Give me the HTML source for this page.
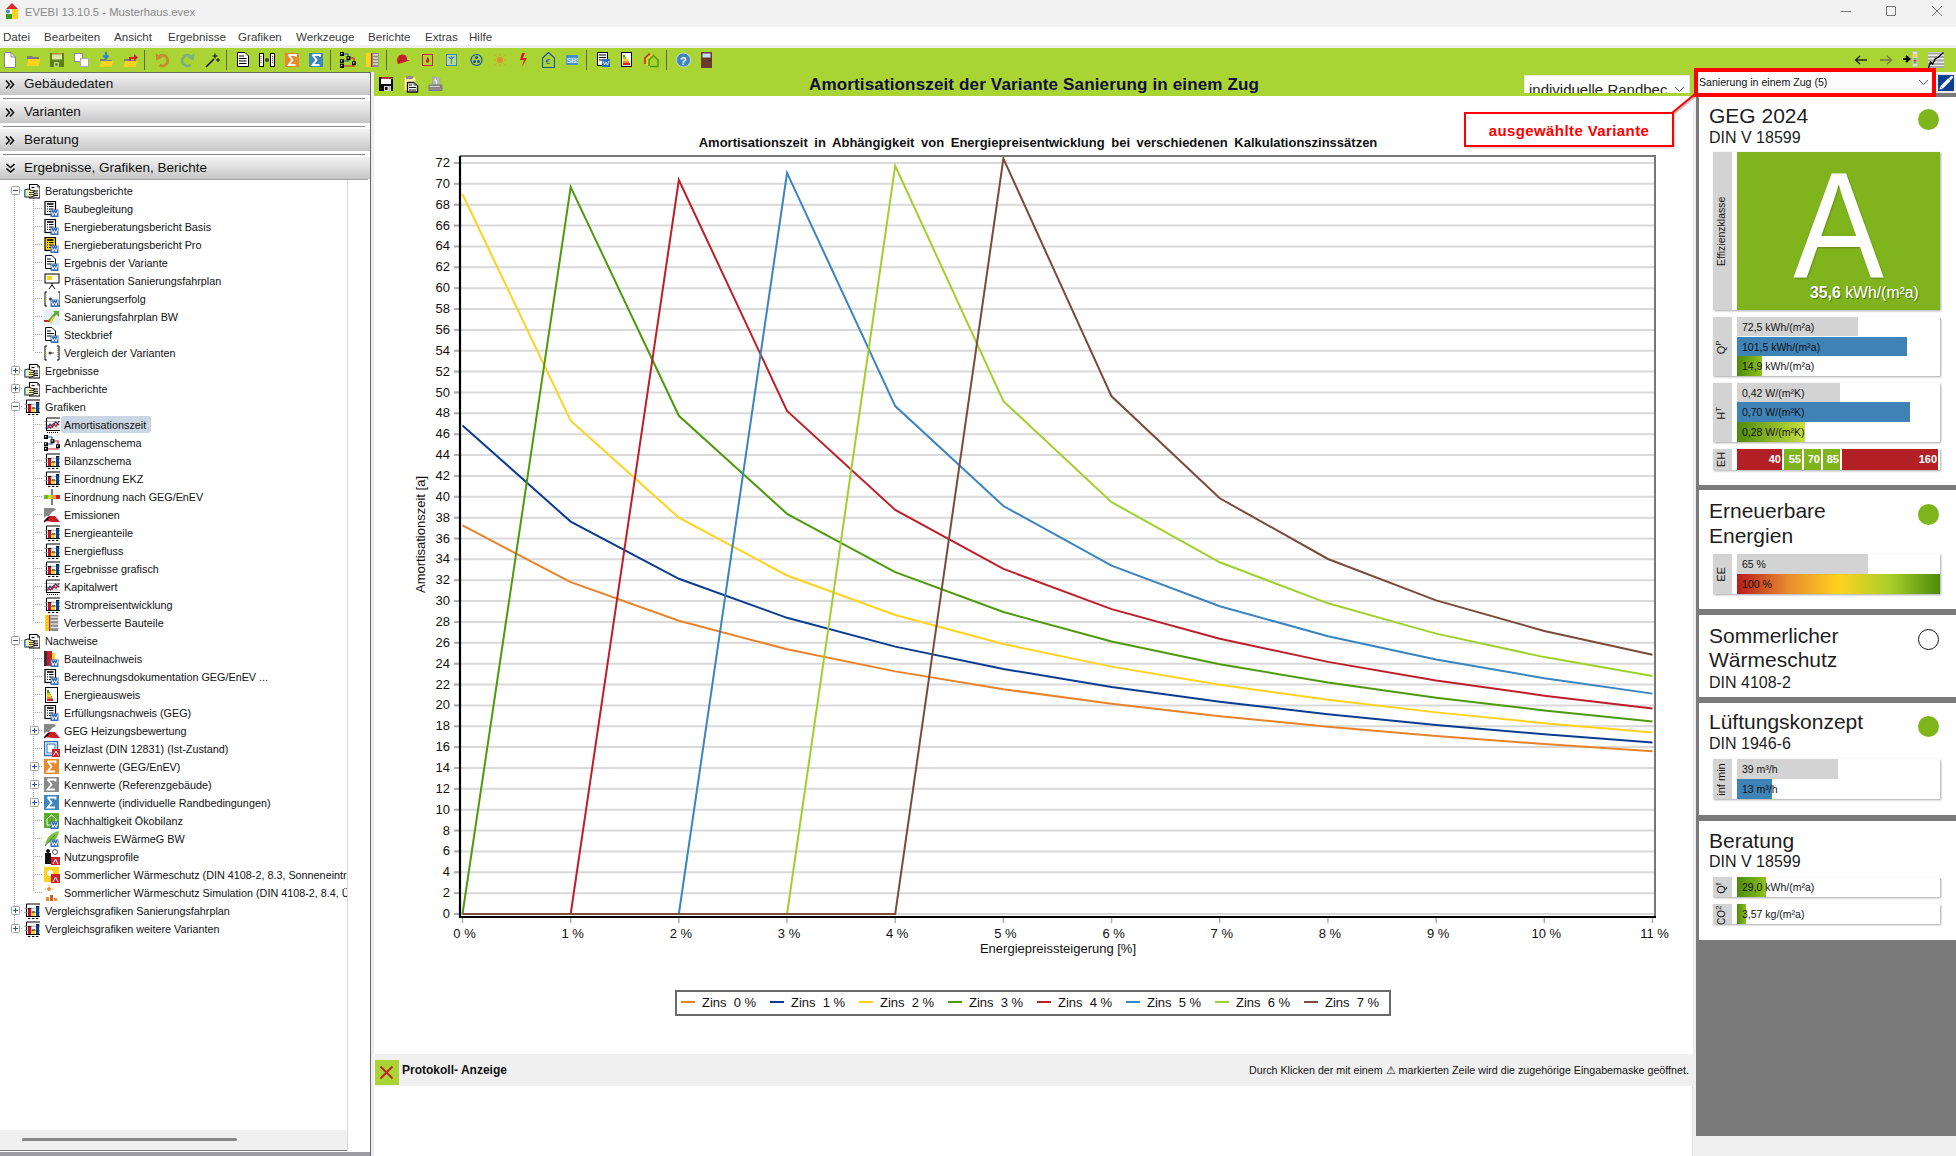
<!DOCTYPE html><html><head><meta charset="utf-8"><style>
*{margin:0;padding:0;box-sizing:border-box}
html,body{width:1956px;height:1156px;overflow:hidden;background:#fff;font-family:"Liberation Sans",sans-serif}
.a{position:absolute}
.t{position:absolute;white-space:pre;line-height:1}
</style></head><body>

<div class="a" style="left:0;top:0;width:1956px;height:27px;background:#F2F2F2"></div>
<svg class="a" style="left:5px;top:3px" width="14" height="17" viewBox="0 0 14 17">
<polygon points="7,0 13,6 1,6" fill="#D32F2F"/><rect x="1" y="6" width="7" height="5" fill="#fff"/>
<circle cx="3" cy="8.5" r="2" fill="#3C8AD0"/><rect x="1" y="11" width="6" height="5" fill="#3E9A1E"/><rect x="7" y="6" width="6" height="10" fill="#FFD21E"/></svg>
<div class="t" style="left:25px;top:7px;font-size:11.3px;color:#888">EVEBI 13.10.5 - Musterhaus.evex</div>
<div class="a" style="left:1841px;top:11px;width:10px;height:1px;background:#777"></div>
<div class="a" style="left:1886px;top:6px;width:10px;height:10px;border:1px solid #777;border-radius:1px"></div>
<svg class="a" style="left:1931px;top:5px" width="12" height="12" viewBox="0 0 12 12"><path d="M1,1 L11,11 M11,1 L1,11" stroke="#777" stroke-width="1"/></svg>
<div class="a" style="left:0;top:27px;width:1956px;height:19px;background:#fff"></div>
<div class="a" style="left:0;top:45px;width:1956px;height:3px;background:#F0F0F0"></div>
<div class="t" style="left:3px;top:31px;font-size:11.6px;color:#3a3a3a">Datei</div>
<div class="t" style="left:44px;top:31px;font-size:11.6px;color:#3a3a3a">Bearbeiten</div>
<div class="t" style="left:114px;top:31px;font-size:11.6px;color:#3a3a3a">Ansicht</div>
<div class="t" style="left:168px;top:31px;font-size:11.6px;color:#3a3a3a">Ergebnisse</div>
<div class="t" style="left:238px;top:31px;font-size:11.6px;color:#3a3a3a">Grafiken</div>
<div class="t" style="left:296px;top:31px;font-size:11.6px;color:#3a3a3a">Werkzeuge</div>
<div class="t" style="left:368px;top:31px;font-size:11.6px;color:#3a3a3a">Berichte</div>
<div class="t" style="left:425px;top:31px;font-size:11.6px;color:#3a3a3a">Extras</div>
<div class="t" style="left:469px;top:31px;font-size:11.6px;color:#3a3a3a">Hilfe</div>
<div class="a" style="left:0;top:48px;width:1956px;height:24px;background:#AAD334"></div>
<div class="a" style="left:374px;top:72px;width:1322px;height:24px;background:#AAD334"></div>
<svg class="a" style="left:3px;top:52px" width="14" height="16" viewBox="0 0 14 16"><path d="M1.5,0.5 H8 L12.5,5 V15.5 H1.5 Z" fill="#fff" stroke="#888"/><path d="M8,0.5 V5 H12.5" fill="none" stroke="#888"/></svg>
<svg class="a" style="left:26px;top:52px" width="15" height="16" viewBox="0 0 15 16"><path d="M1,4 H6 L7,5 H13 V7 H1 Z" fill="#7d7d7d"/><path d="M0.5,14 L2.5,7 H14.5 L12.5,14 Z" fill="#FFD21E"/></svg>
<svg class="a" style="left:50px;top:52px" width="14" height="16" viewBox="0 0 14 16"><rect x="0" y="1" width="14" height="14" fill="#5E7F1D"/><rect x="2" y="1" width="10" height="1.5" fill="#D98A3A"/><rect x="2" y="2.5" width="10" height="5" fill="#D7E9A0"/><rect x="4" y="10" width="5" height="5" fill="#B9D07A"/><rect x="5.5" y="11.5" width="2" height="2" fill="#4A6A14"/></svg>
<svg class="a" style="left:74px;top:52px" width="15" height="16" viewBox="0 0 15 16"><rect x="0.5" y="1.5" width="8" height="8" fill="#fff" stroke="#8a8a8a"/><rect x="6.5" y="6.5" width="8" height="8" fill="#fff" stroke="#aaa"/></svg>
<svg class="a" style="left:99px;top:52px" width="15" height="16" viewBox="0 0 15 16"><path d="M1,7 H6 L7,8 H13 V9 H1 Z" fill="#7d7d7d"/><path d="M0.5,15 L2.5,9 H14.5 L12.5,15 Z" fill="#FFD21E"/><path d="M7,0 V5 M4.5,3.5 L7,6.5 L9.5,3.5" stroke="#2E86D0" stroke-width="2" fill="none"/></svg>
<svg class="a" style="left:123px;top:52px" width="16" height="16" viewBox="0 0 16 16"><path d="M1,7 H6 L7,8 H13 V9 H1 Z" fill="#7d7d7d"/><path d="M0.5,15 L2.5,9 H14.5 L12.5,15 Z" fill="#FFD21E"/><path d="M6,9 V5 H11 V2 L15,5.5 L11,9 V7 H8 V9 Z" fill="#D0202A"/></svg>
<div class="a" style="left:144px;top:50px;width:1px;height:20px;background:#5a6a30"></div>
<svg class="a" style="left:155px;top:52px" width="15" height="16" viewBox="0 0 15 16"><path d="M4,4.5 A5.3,5.3 0 1 1 4.5,13" fill="none" stroke="#C68A30" stroke-width="2.8"/><path d="M0.5,1.5 L1.5,8.5 L7.5,5.5 Z" fill="#C68A30"/></svg>
<svg class="a" style="left:180px;top:52px" width="15" height="16" viewBox="0 0 15 16"><path d="M11,4.5 A5.3,5.3 0 1 0 10.5,13" fill="none" stroke="#7DB07E" stroke-width="2.8"/><path d="M14.5,1.5 L13.5,8.5 L7.5,5.5 Z" fill="#7DB07E"/></svg>
<svg class="a" style="left:205px;top:52px" width="15" height="16" viewBox="0 0 15 16"><path d="M1,15 L9,7" stroke="#111" stroke-width="1.6"/><path d="M10,1.5 V6.5 M7.5,4 H12.5" stroke="#111" stroke-width="1.1"/><path d="M13,6 V10 M11,8 H15" stroke="#111" stroke-width="1"/></svg>
<div class="a" style="left:226px;top:50px;width:1px;height:20px;background:#5a6a30"></div>
<svg class="a" style="left:237px;top:52px" width="12" height="16" viewBox="0 0 12 16"><path d="M0.5,0.5 H8 L11.5,4 V14.5 H0.5 Z" fill="#fff" stroke="#000" stroke-width="1"/><path d="M2,4 H7 M2,6.5 H9.5 M2,9 H9.5 M2,11.5 H9.5" stroke="#000" stroke-width="1"/></svg>
<svg class="a" style="left:259px;top:52px" width="17" height="16" viewBox="0 0 17 16"><rect x="0.5" y="1.5" width="4" height="13" fill="#fff" stroke="#000"/><rect x="11.5" y="1.5" width="4" height="13" fill="#fff" stroke="#000"/><circle cx="8" cy="8" r="2" fill="#444"/><path d="M2,4 V12 M13.5,4 V12" stroke="#C0202A" stroke-dasharray="1,1"/></svg>
<svg class="a" style="left:285px;top:52px" width="14" height="16" viewBox="0 0 14 16"><rect x="0" y="1" width="14" height="14" fill="#E8892E"/><path d="M3.5,3 H11 V5 M10.5,13 H3.5 L7.5,8 L3.5,3" fill="none" stroke="#fff" stroke-width="1.8"/></svg>
<svg class="a" style="left:309px;top:52px" width="14" height="16" viewBox="0 0 14 16"><rect x="0" y="1" width="14" height="14" fill="#3E86BF"/><path d="M3.5,3 H11 V5 M10.5,13 H3.5 L7.5,8 L3.5,3" fill="none" stroke="#fff" stroke-width="1.8"/></svg>
<div class="a" style="left:330px;top:50px;width:1px;height:20px;background:#5a6a30"></div>
<svg class="a" style="left:340px;top:52px" width="16" height="16" viewBox="0 0 16 16"><path d="M4,2 H8 V4.5 M4,9 H8 V8" fill="none" stroke="#1b4fae" stroke-width="1.2"/><path d="M10.5,6 H14 V9.5 M4,14 H14 V13.5" fill="none" stroke="#D0202A" stroke-width="1.2"/><rect x="0" y="0" width="4" height="4" fill="#000"/><rect x="1" y="1" width="1.3" height="1.3" fill="#fff"/><rect x="6.5" y="4.2" width="4" height="4" fill="#000"/><rect x="7.5" y="5.2" width="1.3" height="1.3" fill="#fff"/><rect x="0" y="7.3" width="4" height="4" fill="#000"/><rect x="1" y="8.3" width="1.3" height="1.3" fill="#fff"/><rect x="0" y="12" width="4" height="4" fill="#000"/><rect x="1" y="13" width="1.3" height="1.3" fill="#fff"/><rect x="12" y="9.3" width="4" height="4" fill="#000"/><rect x="13" y="10.3" width="1.3" height="1.3" fill="#fff"/></svg>
<svg class="a" style="left:366px;top:52px" width="13" height="16" viewBox="0 0 13 16"><rect x="0" y="1" width="5" height="14" fill="#FFD21E"/><rect x="5" y="1" width="1.5" height="14" fill="#C0202A"/><rect x="6.5" y="1" width="6" height="14" fill="#888"/><path d="M7,3 H12 M7,6 H12 M7,9 H12 M7,12 H12" stroke="#ddd" stroke-width="1.3"/></svg>
<div class="a" style="left:386px;top:50px;width:1px;height:20px;background:#5a6a30"></div>
<svg class="a" style="left:396px;top:52px" width="15" height="16" viewBox="0 0 15 16"><path d="M1,9 C1,3 6,1.5 9,3 C11,4 11,6 11,8 L14,8 L9,10 L2,12 Z" fill="#C62028"/></svg>
<svg class="a" style="left:422px;top:52px" width="12" height="16" viewBox="0 0 12 16"><rect x="0.5" y="2.5" width="10" height="11" fill="none" stroke="#C62028"/><path d="M5.5,5 C7,7 8,8 7,10 C6,11 4,11 4,9 C4,8 5,7 5.5,5 Z" fill="#C62028"/></svg>
<svg class="a" style="left:446px;top:52px" width="12" height="16" viewBox="0 0 12 16"><rect x="0.5" y="2.5" width="10" height="11" fill="#C8E0F0" fill-opacity="0.5" stroke="#3E86BF"/><path d="M5.5,4 V12 M5.5,7 L8.5,4.5 M5.5,7 L2.5,5" stroke="#3E86BF" stroke-width="1.2"/></svg>
<svg class="a" style="left:470px;top:52px" width="13" height="16" viewBox="0 0 13 16"><circle cx="6.5" cy="8" r="5.5" fill="none" stroke="#1b4fae" stroke-width="1.2"/><circle cx="6.5" cy="5.5" r="1.5" fill="#1b4fae"/><circle cx="4.5" cy="9.5" r="1.5" fill="#1b4fae"/><circle cx="8.5" cy="9.5" r="1.5" fill="#1b4fae"/></svg>
<svg class="a" style="left:494px;top:52px" width="13" height="16" viewBox="0 0 13 16"><circle cx="6" cy="8" r="3" fill="#E8892E"/><path d="M6,1.5 V3.5 M6,12.5 V14.5 M-0.5,8 H1.5 M10.5,8 H12.5 M1.5,3.5 L2.8,4.8 M9.2,11.2 L10.5,12.5 M10.5,3.5 L9.2,4.8 M2.8,11.2 L1.5,12.5" stroke="#E8892E" stroke-width="1"/></svg>
<svg class="a" style="left:519px;top:52px" width="9" height="16" viewBox="0 0 9 16"><path d="M3,1 L1,8 H5 L3,15 L8,6 H4 L6,1 Z" fill="#D0202A"/></svg>
<svg class="a" style="left:542px;top:52px" width="13" height="16" viewBox="0 0 13 16"><path d="M0.5,15.5 V6 L6.5,0.5 L12.5,6 V15.5 Z" fill="none" stroke="#1b4fae" stroke-width="1.2"/><text x="3.5" y="12" font-size="8" fill="#1b4fae" font-family="Liberation Sans">€</text></svg>
<svg class="a" style="left:566px;top:52px" width="12" height="16" viewBox="0 0 12 16"><rect x="0" y="3" width="12" height="10" fill="#4A8FC8"/><text x="0.5" y="11" font-size="7.5" font-weight="bold" fill="#d8ecfa" font-family="Liberation Sans" letter-spacing="-0.6">SBS</text></svg>
<div class="a" style="left:586px;top:50px;width:1px;height:20px;background:#5a6a30"></div>
<svg class="a" style="left:597px;top:52px" width="14" height="16" viewBox="0 0 14 16"><rect x="0.5" y="0.5" width="10" height="13" fill="#fff" stroke="#000"/><path d="M2,3 H9 M2,5.5 H9 M2,8 H7" stroke="#000"/><rect x="5" y="7" width="8" height="8" fill="#2F6DB5"/><path d="M6,9 L7.5,13 L9,10 L10.5,13 L12,9" stroke="#fff" stroke-width="0.8" fill="none"/></svg>
<svg class="a" style="left:621px;top:52px" width="11" height="16" viewBox="0 0 11 16"><rect x="0.5" y="0.5" width="10" height="14" fill="#fff" stroke="#000"/><rect x="2" y="3" width="2" height="2" fill="#4F9A0C"/><rect x="2" y="5" width="3.5" height="2" fill="#9FD12C"/><rect x="2" y="7" width="5" height="2" fill="#FFD21E"/><rect x="2" y="9" width="6" height="2" fill="#E8892E"/><rect x="2" y="11" width="7" height="2" fill="#D0202A"/></svg>
<svg class="a" style="left:644px;top:52px" width="16" height="16" viewBox="0 0 16 16"><path d="M1,12 V6 L5,2 L7,4" fill="none" stroke="#C62028" stroke-width="1.5"/><path d="M3,13 V7 L7,3 L9,5" fill="none" stroke="#FFD21E" stroke-width="1.5"/><path d="M6,14.5 H14 V8 L9.5,3.5 L5,8 V14" fill="none" stroke="#4F9A0C" stroke-width="1.5"/></svg>
<div class="a" style="left:666px;top:50px;width:1px;height:20px;background:#5a6a30"></div>
<svg class="a" style="left:676px;top:52px" width="15" height="16" viewBox="0 0 15 16"><circle cx="7.5" cy="8" r="7" fill="#3E86BF" stroke="#dde" stroke-width="0.8"/><text x="4" y="12.5" font-size="11" font-weight="bold" fill="#fff" font-family="Liberation Sans">?</text></svg>
<svg class="a" style="left:701px;top:52px" width="11" height="16" viewBox="0 0 11 16"><rect x="0" y="0" width="11" height="16" fill="#6B3B2A"/><rect x="1.5" y="1.5" width="8" height="4" fill="#BFE0F0"/><rect x="7.5" y="8" width="2" height="1" fill="#222"/></svg>
<svg class="a" style="left:1854px;top:54px" width="14" height="12" viewBox="0 0 14 12"><path d="M13,6 H2 M6,2 L1.5,6 L6,10" fill="none" stroke="#222" stroke-width="1.3"/></svg>
<svg class="a" style="left:1879px;top:54px" width="14" height="12" viewBox="0 0 14 12"><path d="M1,6 H12 M8,2 L12.5,6 L8,10" fill="none" stroke="#6a7a40" stroke-width="1.3"/></svg>
<svg class="a" style="left:1903px;top:51px" width="16" height="16" viewBox="0 0 16 16"><path d="M0,8 H5 M3,5 L6.5,8 L3,11" fill="none" stroke="#000" stroke-width="2"/><rect x="9.5" y="0.5" width="5" height="15" fill="#ddd" stroke="#bbb" stroke-width="0.5"/><rect x="10.5" y="3" width="3" height="3" fill="#FFD21E"/><rect x="10.5" y="7" width="3" height="1.5" fill="#6a3"/><rect x="10.5" y="9" width="3" height="1.5" fill="#c22"/><rect x="10.5" y="11" width="3" height="1.5" fill="#6a3"/></svg>
<svg class="a" style="left:1928px;top:52px" width="16" height="16" viewBox="0 0 16 16"><rect x="0" y="0" width="16" height="16" fill="#eaeaea"/><path d="M0,1.5 H16 M0,5 H16 M0,8.5 H16 M0,12 H16 M0,15 H16" stroke="#a8a8a8" stroke-width="1.8"/><path d="M0.5,16 L2.5,10 L4.5,12 L7.5,6.5 L10,5.5 L15.5,0.5" fill="none" stroke="#000" stroke-width="1.4"/></svg>
<div class="a" style="left:0;top:72px;width:371px;height:1084px;background:#fff"></div>
<div class="a" style="left:370px;top:72px;width:1px;height:1084px;background:#6a6a6a"></div>
<div class="a" style="left:371px;top:96px;width:3px;height:1060px;background:#EEEEEE"></div>
<div class="a" style="left:371px;top:72px;width:3px;height:24px;background:#EEEEEE"></div>
<div class="a" style="left:0;top:72px;width:371px;height:1px;background:#6a6a6a"></div>
<div class="a" style="left:0;top:73px;width:370px;height:22px;background:linear-gradient(#F2F2F2,#E2E2E2 40%,#C6C6C6)"></div>
<svg class="a" style="left:5px;top:80px" width="10" height="9" viewBox="0 0 10 9"><path d="M1,0.5 L4.5,4.5 L1,8.5 M5,0.5 L8.5,4.5 L5,8.5" fill="none" stroke="#111" stroke-width="1.6"/></svg>
<div class="t" style="left:24px;top:77px;font-size:13.5px;color:#111">Gebäudedaten</div>
<div class="a" style="left:0;top:101px;width:370px;height:22px;background:linear-gradient(#F2F2F2,#E2E2E2 40%,#C6C6C6)"></div>
<div class="a" style="left:3px;top:98px;width:362px;height:1px;background:#8a8a8a"></div>
<svg class="a" style="left:5px;top:108px" width="10" height="9" viewBox="0 0 10 9"><path d="M1,0.5 L4.5,4.5 L1,8.5 M5,0.5 L8.5,4.5 L5,8.5" fill="none" stroke="#111" stroke-width="1.6"/></svg>
<div class="t" style="left:24px;top:105px;font-size:13.5px;color:#111">Varianten</div>
<div class="a" style="left:0;top:129px;width:370px;height:22px;background:linear-gradient(#F2F2F2,#E2E2E2 40%,#C6C6C6)"></div>
<div class="a" style="left:3px;top:126px;width:362px;height:1px;background:#8a8a8a"></div>
<svg class="a" style="left:5px;top:136px" width="10" height="9" viewBox="0 0 10 9"><path d="M1,0.5 L4.5,4.5 L1,8.5 M5,0.5 L8.5,4.5 L5,8.5" fill="none" stroke="#111" stroke-width="1.6"/></svg>
<div class="t" style="left:24px;top:133px;font-size:13.5px;color:#111">Beratung</div>
<div class="a" style="left:0;top:157px;width:370px;height:22px;background:linear-gradient(#F2F2F2,#E2E2E2 40%,#C6C6C6)"></div>
<div class="a" style="left:3px;top:154px;width:362px;height:1px;background:#8a8a8a"></div>
<div class="a" style="left:0;top:179px;width:368px;height:1px;background:#A0A0A0"></div>
<svg class="a" style="left:6px;top:163px" width="9" height="11" viewBox="0 0 9 11"><path d="M0.5,1 L4.5,4.5 L8.5,1 M0.5,5.5 L4.5,9 L8.5,5.5" fill="none" stroke="#111" stroke-width="1.6"/></svg>
<div class="t" style="left:24px;top:161px;font-size:13.5px;color:#111">Ergebnisse, Grafiken, Berichte</div>
<div class="a" style="left:347px;top:180px;width:1px;height:971px;background:#D8D8D8"></div>
<div class="a" style="left:0;top:1130px;width:347px;height:21px;background:#F0F0F0"></div>
<div class="a" style="left:0;top:1150px;width:347px;height:1px;background:#777"></div>
<div class="a" style="left:22px;top:1138px;width:215px;height:3px;background:#888;border-radius:2px"></div>
<div class="a" style="left:0;top:1152px;width:370px;height:4px;background:#9C9CA2"></div>
<div class="a" style="left:0;top:180px;width:347px;height:950px;overflow:hidden">
<div class="a" style="left:14px;top:15px;width:1px;height:733px;background-image:repeating-linear-gradient(180deg,#A0A0A0 0 1px,transparent 1px 2px)"></div>
<div class="a" style="left:33px;top:18px;width:1px;height:154px;background-image:repeating-linear-gradient(180deg,#A0A0A0 0 1px,transparent 1px 2px)"></div>
<div class="a" style="left:33px;top:234px;width:1px;height:208px;background-image:repeating-linear-gradient(180deg,#A0A0A0 0 1px,transparent 1px 2px)"></div>
<div class="a" style="left:33px;top:468px;width:1px;height:244px;background-image:repeating-linear-gradient(180deg,#A0A0A0 0 1px,transparent 1px 2px)"></div>
<div class="a" style="left:19px;top:10px;width:4px;height:1px;background-image:repeating-linear-gradient(90deg,#A0A0A0 0 1px,transparent 1px 2px)"></div>
<svg class="a" style="left:11px;top:6px" width="9" height="9" viewBox="0 0 9 9"><rect x="0.5" y="0.5" width="8" height="8" rx="1" fill="#fff" stroke="#A0A0A0"/><path d="M2,4.5 H7" stroke="#3050A0"/></svg>
<svg class="a" style="left:24px;top:3px" width="16" height="16" viewBox="0 0 16 16"><path d="M5.5,1.5 H13 L16,4.5 V15 H5.5 Z" fill="#fff" stroke="#000" stroke-width="1.1"/><path d="M13,1.5 V4.5 H16 Z" fill="#666"/><path d="M7.5,4.5 H10.5" stroke="#000" stroke-width="1.2"/><path d="M10,8 H14 M10,10.2 H14 M10,12.4 H14" stroke="#000" stroke-width="1.1"/><path d="M0.5,7 L4,6 L8,7.5 L11,8 L9,9.3 L11,10.5 L9,11.5 L10.5,12.8 L7,14 H0.5 Z" fill="#F8F0B0" stroke="#000" stroke-width="0.9"/><path d="M5,9.5 H9.5 M5,11.5 H9" stroke="#000" stroke-width="0.7"/><rect x="0" y="7" width="1.6" height="7" fill="#3A7CC8"/></svg>
<div class="t" style="left:45px;top:6px;font-size:10.8px;color:#111">Beratungsberichte</div>
<div class="a" style="left:35px;top:28px;width:8px;height:1px;background-image:repeating-linear-gradient(90deg,#A0A0A0 0 1px,transparent 1px 2px)"></div>
<svg class="a" style="left:44px;top:21px" width="16" height="16" viewBox="0 0 16 16"><rect x="1" y="0.5" width="10.5" height="13" fill="#fff" stroke="#000" stroke-width="1.2"/><path d="M3,3 H9.5" stroke="#000" stroke-width="1.6"/><path d="M3,5.5 H4 M5,5.5 H9.5 M3,8 H4 M5,8 H9.5 M3,10.5 H4 M5,10.5 H7" stroke="#000" stroke-width="1"/><rect x="6.5" y="8.5" width="8" height="8" fill="#3B6FB6"/><path d="M7.5,10.5 L9,14.5 L10.5,11.5 L12,14.5 L13.5,10.5" stroke="#fff" stroke-width="1" fill="none"/><path d="M7,9.5 H14" stroke="#9fb8e0" stroke-width="0.8" stroke-dasharray="1,1"/></svg>
<div class="t" style="left:64px;top:24px;font-size:10.8px;color:#111">Baubegleitung</div>
<div class="a" style="left:35px;top:46px;width:8px;height:1px;background-image:repeating-linear-gradient(90deg,#A0A0A0 0 1px,transparent 1px 2px)"></div>
<svg class="a" style="left:44px;top:39px" width="16" height="16" viewBox="0 0 16 16"><rect x="1" y="0.5" width="10.5" height="13" fill="#fff" stroke="#000" stroke-width="1.2"/><path d="M3,3 H9.5" stroke="#000" stroke-width="1.6"/><path d="M3,5.5 H4 M5,5.5 H9.5 M3,8 H4 M5,8 H9.5 M3,10.5 H4 M5,10.5 H7" stroke="#000" stroke-width="1"/><rect x="6.5" y="8.5" width="8" height="8" fill="#3B6FB6"/><path d="M7.5,10.5 L9,14.5 L10.5,11.5 L12,14.5 L13.5,10.5" stroke="#fff" stroke-width="1" fill="none"/><path d="M7,9.5 H14" stroke="#9fb8e0" stroke-width="0.8" stroke-dasharray="1,1"/></svg>
<div class="t" style="left:64px;top:42px;font-size:10.8px;color:#111">Energieberatungsbericht Basis</div>
<div class="a" style="left:35px;top:64px;width:8px;height:1px;background-image:repeating-linear-gradient(90deg,#A0A0A0 0 1px,transparent 1px 2px)"></div>
<svg class="a" style="left:44px;top:57px" width="16" height="16" viewBox="0 0 16 16"><rect x="1" y="0.5" width="10.5" height="13" fill="#FFD21E" stroke="#000" stroke-width="1.2"/><path d="M3,3 H9.5" stroke="#000" stroke-width="1.6"/><path d="M3,5.5 H4 M5,5.5 H9.5 M3,8 H4 M5,8 H9.5 M3,10.5 H4 M5,10.5 H7" stroke="#000" stroke-width="1"/><rect x="6.5" y="8.5" width="8" height="8" fill="#3B6FB6"/><path d="M7.5,10.5 L9,14.5 L10.5,11.5 L12,14.5 L13.5,10.5" stroke="#fff" stroke-width="1" fill="none"/><path d="M7,9.5 H14" stroke="#9fb8e0" stroke-width="0.8" stroke-dasharray="1,1"/></svg>
<div class="t" style="left:64px;top:60px;font-size:10.8px;color:#111">Energieberatungsbericht Pro</div>
<div class="a" style="left:35px;top:82px;width:8px;height:1px;background-image:repeating-linear-gradient(90deg,#A0A0A0 0 1px,transparent 1px 2px)"></div>
<svg class="a" style="left:44px;top:75px" width="16" height="16" viewBox="0 0 16 16"><path d="M1.5,0.5 H8 L11.5,4 V13.5 H1.5 Z" fill="#fff" stroke="#000"/><path d="M3,4 H7 M3,6.5 H10 M3,9 H7" stroke="#000"/><rect x="6.5" y="8.5" width="8" height="8" fill="#3B6FB6"/><path d="M7.5,10.5 L9,14.5 L10.5,11.5 L12,14.5 L13.5,10.5" stroke="#fff" stroke-width="1" fill="none"/><path d="M7,9.5 H14" stroke="#9fb8e0" stroke-width="0.8" stroke-dasharray="1,1"/></svg>
<div class="t" style="left:64px;top:78px;font-size:10.8px;color:#111">Ergebnis der Variante</div>
<div class="a" style="left:35px;top:100px;width:8px;height:1px;background-image:repeating-linear-gradient(90deg,#A0A0A0 0 1px,transparent 1px 2px)"></div>
<svg class="a" style="left:44px;top:93px" width="16" height="16" viewBox="0 0 16 16"><rect x="1" y="1" width="14" height="9" fill="#fff" stroke="#000"/><rect x="3" y="3" width="5" height="4" fill="#FFD21E"/><path d="M8,10 V12 M8,12 L5,16 M8,12 L11,16" stroke="#000"/></svg>
<div class="t" style="left:64px;top:96px;font-size:10.8px;color:#111">Präsentation Sanierungsfahrplan</div>
<div class="a" style="left:35px;top:118px;width:8px;height:1px;background-image:repeating-linear-gradient(90deg,#A0A0A0 0 1px,transparent 1px 2px)"></div>
<svg class="a" style="left:44px;top:111px" width="16" height="16" viewBox="0 0 16 16"><path d="M3,1 H1 V15 H3 M14,1 H16 V15 H14" fill="none" stroke="#000"/><path d="M2,4 V12" stroke="#9FD12C" stroke-dasharray="1,1"/><circle cx="6.5" cy="8" r="1.5" fill="#444"/><rect x="6.5" y="8.5" width="8" height="8" fill="#3B6FB6"/><path d="M7.5,10.5 L9,14.5 L10.5,11.5 L12,14.5 L13.5,10.5" stroke="#fff" stroke-width="1" fill="none"/><path d="M7,9.5 H14" stroke="#9fb8e0" stroke-width="0.8" stroke-dasharray="1,1"/></svg>
<div class="t" style="left:64px;top:114px;font-size:10.8px;color:#111">Sanierungserfolg</div>
<div class="a" style="left:35px;top:136px;width:8px;height:1px;background-image:repeating-linear-gradient(90deg,#A0A0A0 0 1px,transparent 1px 2px)"></div>
<svg class="a" style="left:44px;top:129px" width="16" height="16" viewBox="0 0 16 16"><rect x="0" y="0" width="16" height="16" fill="#E4F0F8"/><rect x="0" y="11" width="7" height="2" fill="#D0202A"/><rect x="0" y="13" width="7" height="1" fill="#fff"/><path d="M5,12 L13,3" stroke="#5AAE2A" stroke-width="2.5"/><path d="M9,2 H15 V8 Z" fill="#5AAE2A"/><path d="M6,14 L10,8" stroke="#FFD21E" stroke-width="2"/></svg>
<div class="t" style="left:64px;top:132px;font-size:10.8px;color:#111">Sanierungsfahrplan BW</div>
<div class="a" style="left:35px;top:154px;width:8px;height:1px;background-image:repeating-linear-gradient(90deg,#A0A0A0 0 1px,transparent 1px 2px)"></div>
<svg class="a" style="left:44px;top:147px" width="16" height="16" viewBox="0 0 16 16"><path d="M1.5,0.5 H8 L11.5,4 V13.5 H1.5 Z" fill="#fff" stroke="#000"/><path d="M3,4 H7 M3,6.5 H10 M3,9 H7" stroke="#000"/><rect x="6.5" y="8.5" width="8" height="8" fill="#3B6FB6"/><path d="M7.5,10.5 L9,14.5 L10.5,11.5 L12,14.5 L13.5,10.5" stroke="#fff" stroke-width="1" fill="none"/><path d="M7,9.5 H14" stroke="#9fb8e0" stroke-width="0.8" stroke-dasharray="1,1"/></svg>
<div class="t" style="left:64px;top:150px;font-size:10.8px;color:#111">Steckbrief</div>
<div class="a" style="left:35px;top:172px;width:8px;height:1px;background-image:repeating-linear-gradient(90deg,#A0A0A0 0 1px,transparent 1px 2px)"></div>
<svg class="a" style="left:44px;top:165px" width="16" height="16" viewBox="0 0 16 16"><path d="M3,1 H1 V15 H3 M13,1 H15 V15 H13" fill="none" stroke="#000"/><path d="M2,3 V13" stroke="#9FD12C" stroke-dasharray="1,1"/><path d="M14,3 V13" stroke="#D0202A" stroke-dasharray="1,1"/><circle cx="6" cy="8" r="1.5" fill="#444"/><path d="M7,8 H10" stroke="#444"/></svg>
<div class="t" style="left:64px;top:168px;font-size:10.8px;color:#111">Vergleich der Varianten</div>
<div class="a" style="left:19px;top:190px;width:4px;height:1px;background-image:repeating-linear-gradient(90deg,#A0A0A0 0 1px,transparent 1px 2px)"></div>
<svg class="a" style="left:11px;top:186px" width="9" height="9" viewBox="0 0 9 9"><rect x="0.5" y="0.5" width="8" height="8" rx="1" fill="#fff" stroke="#A0A0A0"/><path d="M2,4.5 H7 M4.5,2 V7" stroke="#3050A0"/></svg>
<svg class="a" style="left:24px;top:183px" width="16" height="16" viewBox="0 0 16 16"><path d="M5.5,1.5 H13 L16,4.5 V15 H5.5 Z" fill="#fff" stroke="#000" stroke-width="1.1"/><path d="M13,1.5 V4.5 H16 Z" fill="#666"/><path d="M7.5,4.5 H10.5" stroke="#000" stroke-width="1.2"/><path d="M10,8 H14 M10,10.2 H14 M10,12.4 H14" stroke="#000" stroke-width="1.1"/><path d="M0.5,7 L4,6 L8,7.5 L11,8 L9,9.3 L11,10.5 L9,11.5 L10.5,12.8 L7,14 H0.5 Z" fill="#F8F0B0" stroke="#000" stroke-width="0.9"/><path d="M5,9.5 H9.5 M5,11.5 H9" stroke="#000" stroke-width="0.7"/><rect x="0" y="7" width="1.6" height="7" fill="#3A7CC8"/></svg>
<div class="t" style="left:45px;top:186px;font-size:10.8px;color:#111">Ergebnisse</div>
<div class="a" style="left:19px;top:208px;width:4px;height:1px;background-image:repeating-linear-gradient(90deg,#A0A0A0 0 1px,transparent 1px 2px)"></div>
<svg class="a" style="left:11px;top:204px" width="9" height="9" viewBox="0 0 9 9"><rect x="0.5" y="0.5" width="8" height="8" rx="1" fill="#fff" stroke="#A0A0A0"/><path d="M2,4.5 H7 M4.5,2 V7" stroke="#3050A0"/></svg>
<svg class="a" style="left:24px;top:201px" width="16" height="16" viewBox="0 0 16 16"><path d="M5.5,1.5 H13 L16,4.5 V15 H5.5 Z" fill="#fff" stroke="#000" stroke-width="1.1"/><path d="M13,1.5 V4.5 H16 Z" fill="#666"/><path d="M7.5,4.5 H10.5" stroke="#000" stroke-width="1.2"/><path d="M10,8 H14 M10,10.2 H14 M10,12.4 H14" stroke="#000" stroke-width="1.1"/><path d="M0.5,7 L4,6 L8,7.5 L11,8 L9,9.3 L11,10.5 L9,11.5 L10.5,12.8 L7,14 H0.5 Z" fill="#F8F0B0" stroke="#000" stroke-width="0.9"/><path d="M5,9.5 H9.5 M5,11.5 H9" stroke="#000" stroke-width="0.7"/><rect x="0" y="7" width="1.6" height="7" fill="#3A7CC8"/></svg>
<div class="t" style="left:45px;top:204px;font-size:10.8px;color:#111">Fachberichte</div>
<div class="a" style="left:19px;top:226px;width:4px;height:1px;background-image:repeating-linear-gradient(90deg,#A0A0A0 0 1px,transparent 1px 2px)"></div>
<svg class="a" style="left:11px;top:222px" width="9" height="9" viewBox="0 0 9 9"><rect x="0.5" y="0.5" width="8" height="8" rx="1" fill="#fff" stroke="#A0A0A0"/><path d="M2,4.5 H7" stroke="#3050A0"/></svg>
<svg class="a" style="left:24px;top:219px" width="16" height="16" viewBox="0 0 16 16"><path d="M2.5,1 V13.5 H16 M2.5,1 H16" fill="none" stroke="#000" stroke-width="1.1"/><path d="M0,5.3 H16 M0,9.5 H16" stroke="#999" stroke-width="0.8"/><rect x="4" y="5" width="3.2" height="8" fill="#C8141E"/><rect x="4" y="5" width="3.2" height="1" fill="#111"/><rect x="8" y="8.5" width="3.2" height="4.5" fill="#FFD21E"/><rect x="8" y="8.5" width="3.2" height="1" fill="#111"/><rect x="12" y="3" width="3.2" height="10" fill="#0B3F96"/><rect x="12" y="3" width="3.2" height="1" fill="#111"/><path d="M4,15.5 H6.3 M8,15.5 H10.3 M12,15.5 H14.3" stroke="#000" stroke-width="1.2"/></svg>
<div class="t" style="left:45px;top:222px;font-size:10.8px;color:#111">Grafiken</div>
<div class="a" style="left:35px;top:244px;width:8px;height:1px;background-image:repeating-linear-gradient(90deg,#A0A0A0 0 1px,transparent 1px 2px)"></div>
<div class="a" style="left:61px;top:236px;width:90px;height:17px;background:#CAD6E4;border-radius:3px"></div>
<svg class="a" style="left:44px;top:237px" width="16" height="16" viewBox="0 0 16 16"><path d="M0,4.5 H16 M0,8 H16 M0,11 H16" stroke="#aaa" stroke-width="0.8"/><path d="M2.5,1 V13.5 H16 M2.5,1 H16" fill="none" stroke="#000" stroke-width="1.1"/><path d="M3.5,11.5 L6,7 L8.5,10 L11.5,5 L15,8" stroke="#0B3F96" stroke-width="1.2" fill="none"/><path d="M3.5,8.5 L6.5,11 L9.5,6.5 L12,9.5 L15,4" stroke="#C8141E" stroke-width="1.2" fill="none"/><path d="M3,15.5 H15" stroke="#000" stroke-width="1.1" stroke-dasharray="1,1"/></svg>
<div class="t" style="left:64px;top:240px;font-size:10.8px;color:#111">Amortisationszeit</div>
<div class="a" style="left:35px;top:262px;width:8px;height:1px;background-image:repeating-linear-gradient(90deg,#A0A0A0 0 1px,transparent 1px 2px)"></div>
<svg class="a" style="left:44px;top:255px" width="16" height="16" viewBox="0 0 16 16"><path d="M4,2 H8 V4.5 M4,9 H8 V8" fill="none" stroke="#1b4fae" stroke-width="1.2"/><path d="M10.5,6 H14 V9.5 M4,14 H14 V13.5" fill="none" stroke="#D0202A" stroke-width="1.2"/><rect x="0" y="0" width="4" height="4" fill="#000"/><rect x="1" y="1" width="1.3" height="1.3" fill="#fff"/><rect x="6.5" y="4.2" width="4" height="4" fill="#000"/><rect x="7.5" y="5.2" width="1.3" height="1.3" fill="#fff"/><rect x="0" y="7.3" width="4" height="4" fill="#000"/><rect x="1" y="8.3" width="1.3" height="1.3" fill="#fff"/><rect x="0" y="12" width="4" height="4" fill="#000"/><rect x="1" y="13" width="1.3" height="1.3" fill="#fff"/><rect x="12" y="9.3" width="4" height="4" fill="#000"/><rect x="13" y="10.3" width="1.3" height="1.3" fill="#fff"/></svg>
<div class="t" style="left:64px;top:258px;font-size:10.8px;color:#111">Anlagenschema</div>
<div class="a" style="left:35px;top:280px;width:8px;height:1px;background-image:repeating-linear-gradient(90deg,#A0A0A0 0 1px,transparent 1px 2px)"></div>
<svg class="a" style="left:44px;top:273px" width="16" height="16" viewBox="0 0 16 16"><path d="M2.5,1 V13.5 H16 M2.5,1 H16" fill="none" stroke="#000" stroke-width="1.1"/><path d="M0,5.3 H16 M0,9.5 H16" stroke="#999" stroke-width="0.8"/><rect x="4" y="5" width="3.2" height="8" fill="#C8141E"/><rect x="4" y="5" width="3.2" height="1" fill="#111"/><rect x="8" y="8.5" width="3.2" height="4.5" fill="#FFD21E"/><rect x="8" y="8.5" width="3.2" height="1" fill="#111"/><rect x="12" y="3" width="3.2" height="10" fill="#0B3F96"/><rect x="12" y="3" width="3.2" height="1" fill="#111"/><path d="M4,15.5 H6.3 M8,15.5 H10.3 M12,15.5 H14.3" stroke="#000" stroke-width="1.2"/></svg>
<div class="t" style="left:64px;top:276px;font-size:10.8px;color:#111">Bilanzschema</div>
<div class="a" style="left:35px;top:298px;width:8px;height:1px;background-image:repeating-linear-gradient(90deg,#A0A0A0 0 1px,transparent 1px 2px)"></div>
<svg class="a" style="left:44px;top:291px" width="16" height="16" viewBox="0 0 16 16"><path d="M2.5,1 V13.5 H16 M2.5,1 H16" fill="none" stroke="#000" stroke-width="1.1"/><path d="M0,5.3 H16 M0,9.5 H16" stroke="#999" stroke-width="0.8"/><rect x="4" y="5" width="3.2" height="8" fill="#C8141E"/><rect x="4" y="5" width="3.2" height="1" fill="#111"/><rect x="8" y="8.5" width="3.2" height="4.5" fill="#FFD21E"/><rect x="8" y="8.5" width="3.2" height="1" fill="#111"/><rect x="12" y="3" width="3.2" height="10" fill="#0B3F96"/><rect x="12" y="3" width="3.2" height="1" fill="#111"/><path d="M4,15.5 H6.3 M8,15.5 H10.3 M12,15.5 H14.3" stroke="#000" stroke-width="1.2"/></svg>
<div class="t" style="left:64px;top:294px;font-size:10.8px;color:#111">Einordnung EKZ</div>
<div class="a" style="left:35px;top:316px;width:8px;height:1px;background-image:repeating-linear-gradient(90deg,#A0A0A0 0 1px,transparent 1px 2px)"></div>
<svg class="a" style="left:44px;top:309px" width="16" height="16" viewBox="0 0 16 16"><path d="M8,0 V16" stroke="#000"/><rect x="0" y="6" width="4" height="4" fill="#6AB32A"/><rect x="4" y="6" width="4" height="4" fill="#C8D82A"/><rect x="8" y="6" width="4" height="4" fill="#F0A030"/><rect x="12" y="6" width="4" height="4" fill="#D0202A"/></svg>
<div class="t" style="left:64px;top:312px;font-size:10.8px;color:#111">Einordnung nach GEG/EnEV</div>
<div class="a" style="left:35px;top:334px;width:8px;height:1px;background-image:repeating-linear-gradient(90deg,#A0A0A0 0 1px,transparent 1px 2px)"></div>
<svg class="a" style="left:44px;top:327px" width="16" height="16" viewBox="0 0 16 16"><path d="M0,1 H10 L12,3 L8,5 L5,9 L2,9 L0,11 Z" fill="#888"/><path d="M0,14 L5,9 H11 L16,15 H9 Z" fill="#C62028"/><path d="M0,15 L5,10" stroke="#000" stroke-width="1.5"/></svg>
<div class="t" style="left:64px;top:330px;font-size:10.8px;color:#111">Emissionen</div>
<div class="a" style="left:35px;top:352px;width:8px;height:1px;background-image:repeating-linear-gradient(90deg,#A0A0A0 0 1px,transparent 1px 2px)"></div>
<svg class="a" style="left:44px;top:345px" width="16" height="16" viewBox="0 0 16 16"><path d="M2.5,1 V13.5 H16 M2.5,1 H16" fill="none" stroke="#000" stroke-width="1.1"/><path d="M0,5.3 H16 M0,9.5 H16" stroke="#999" stroke-width="0.8"/><rect x="4" y="5" width="3.2" height="8" fill="#C8141E"/><rect x="4" y="5" width="3.2" height="1" fill="#111"/><rect x="8" y="8.5" width="3.2" height="4.5" fill="#FFD21E"/><rect x="8" y="8.5" width="3.2" height="1" fill="#111"/><rect x="12" y="3" width="3.2" height="10" fill="#0B3F96"/><rect x="12" y="3" width="3.2" height="1" fill="#111"/><path d="M4,15.5 H6.3 M8,15.5 H10.3 M12,15.5 H14.3" stroke="#000" stroke-width="1.2"/></svg>
<div class="t" style="left:64px;top:348px;font-size:10.8px;color:#111">Energieanteile</div>
<div class="a" style="left:35px;top:370px;width:8px;height:1px;background-image:repeating-linear-gradient(90deg,#A0A0A0 0 1px,transparent 1px 2px)"></div>
<svg class="a" style="left:44px;top:363px" width="16" height="16" viewBox="0 0 16 16"><path d="M2.5,1 V13.5 H16 M2.5,1 H16" fill="none" stroke="#000" stroke-width="1.1"/><path d="M0,5.3 H16 M0,9.5 H16" stroke="#999" stroke-width="0.8"/><rect x="4" y="5" width="3.2" height="8" fill="#C8141E"/><rect x="4" y="5" width="3.2" height="1" fill="#111"/><rect x="8" y="8.5" width="3.2" height="4.5" fill="#FFD21E"/><rect x="8" y="8.5" width="3.2" height="1" fill="#111"/><rect x="12" y="3" width="3.2" height="10" fill="#0B3F96"/><rect x="12" y="3" width="3.2" height="1" fill="#111"/><path d="M4,15.5 H6.3 M8,15.5 H10.3 M12,15.5 H14.3" stroke="#000" stroke-width="1.2"/></svg>
<div class="t" style="left:64px;top:366px;font-size:10.8px;color:#111">Energiefluss</div>
<div class="a" style="left:35px;top:388px;width:8px;height:1px;background-image:repeating-linear-gradient(90deg,#A0A0A0 0 1px,transparent 1px 2px)"></div>
<svg class="a" style="left:44px;top:381px" width="16" height="16" viewBox="0 0 16 16"><path d="M2.5,1 V13.5 H16 M2.5,1 H16" fill="none" stroke="#000" stroke-width="1.1"/><path d="M0,5.3 H16 M0,9.5 H16" stroke="#999" stroke-width="0.8"/><rect x="4" y="5" width="3.2" height="8" fill="#C8141E"/><rect x="4" y="5" width="3.2" height="1" fill="#111"/><rect x="8" y="8.5" width="3.2" height="4.5" fill="#FFD21E"/><rect x="8" y="8.5" width="3.2" height="1" fill="#111"/><rect x="12" y="3" width="3.2" height="10" fill="#0B3F96"/><rect x="12" y="3" width="3.2" height="1" fill="#111"/><path d="M4,15.5 H6.3 M8,15.5 H10.3 M12,15.5 H14.3" stroke="#000" stroke-width="1.2"/></svg>
<div class="t" style="left:64px;top:384px;font-size:10.8px;color:#111">Ergebnisse grafisch</div>
<div class="a" style="left:35px;top:406px;width:8px;height:1px;background-image:repeating-linear-gradient(90deg,#A0A0A0 0 1px,transparent 1px 2px)"></div>
<svg class="a" style="left:44px;top:399px" width="16" height="16" viewBox="0 0 16 16"><path d="M0,4.5 H16 M0,8 H16 M0,11 H16" stroke="#aaa" stroke-width="0.8"/><path d="M2.5,1 V13.5 H16 M2.5,1 H16" fill="none" stroke="#000" stroke-width="1.1"/><path d="M3.5,11.5 L6,7 L8.5,10 L11.5,5 L15,8" stroke="#0B3F96" stroke-width="1.2" fill="none"/><path d="M3.5,8.5 L6.5,11 L9.5,6.5 L12,9.5 L15,4" stroke="#C8141E" stroke-width="1.2" fill="none"/><path d="M3,15.5 H15" stroke="#000" stroke-width="1.1" stroke-dasharray="1,1"/></svg>
<div class="t" style="left:64px;top:402px;font-size:10.8px;color:#111">Kapitalwert</div>
<div class="a" style="left:35px;top:424px;width:8px;height:1px;background-image:repeating-linear-gradient(90deg,#A0A0A0 0 1px,transparent 1px 2px)"></div>
<svg class="a" style="left:44px;top:417px" width="16" height="16" viewBox="0 0 16 16"><path d="M2.5,1 V13.5 H16 M2.5,1 H16" fill="none" stroke="#000" stroke-width="1.1"/><path d="M0,5.3 H16 M0,9.5 H16" stroke="#999" stroke-width="0.8"/><rect x="4" y="5" width="3.2" height="8" fill="#C8141E"/><rect x="4" y="5" width="3.2" height="1" fill="#111"/><rect x="8" y="8.5" width="3.2" height="4.5" fill="#FFD21E"/><rect x="8" y="8.5" width="3.2" height="1" fill="#111"/><rect x="12" y="3" width="3.2" height="10" fill="#0B3F96"/><rect x="12" y="3" width="3.2" height="1" fill="#111"/><path d="M4,15.5 H6.3 M8,15.5 H10.3 M12,15.5 H14.3" stroke="#000" stroke-width="1.2"/></svg>
<div class="t" style="left:64px;top:420px;font-size:10.8px;color:#111">Strompreisentwicklung</div>
<div class="a" style="left:35px;top:442px;width:8px;height:1px;background-image:repeating-linear-gradient(90deg,#A0A0A0 0 1px,transparent 1px 2px)"></div>
<svg class="a" style="left:44px;top:435px" width="16" height="16" viewBox="0 0 16 16"><rect x="1" y="0" width="4" height="16" fill="#FFD21E"/><path d="M3,1 V15" stroke="#c9a800" stroke-width="1" stroke-dasharray="1,2"/><rect x="5" y="0" width="1.2" height="16" fill="#C62028"/><rect x="6.2" y="0" width="8" height="16" fill="#8a8a8a"/><path d="M6.5,2 H14 M6.5,5.5 H14 M6.5,9 H14 M6.5,12.5 H14" stroke="#e0e0e0" stroke-width="1.6"/></svg>
<div class="t" style="left:64px;top:438px;font-size:10.8px;color:#111">Verbesserte Bauteile</div>
<div class="a" style="left:19px;top:460px;width:4px;height:1px;background-image:repeating-linear-gradient(90deg,#A0A0A0 0 1px,transparent 1px 2px)"></div>
<svg class="a" style="left:11px;top:456px" width="9" height="9" viewBox="0 0 9 9"><rect x="0.5" y="0.5" width="8" height="8" rx="1" fill="#fff" stroke="#A0A0A0"/><path d="M2,4.5 H7" stroke="#3050A0"/></svg>
<svg class="a" style="left:24px;top:453px" width="16" height="16" viewBox="0 0 16 16"><path d="M5.5,1.5 H13 L16,4.5 V15 H5.5 Z" fill="#fff" stroke="#000" stroke-width="1.1"/><path d="M13,1.5 V4.5 H16 Z" fill="#666"/><path d="M7.5,4.5 H10.5" stroke="#000" stroke-width="1.2"/><path d="M10,8 H14 M10,10.2 H14 M10,12.4 H14" stroke="#000" stroke-width="1.1"/><path d="M0.5,7 L4,6 L8,7.5 L11,8 L9,9.3 L11,10.5 L9,11.5 L10.5,12.8 L7,14 H0.5 Z" fill="#F8F0B0" stroke="#000" stroke-width="0.9"/><path d="M5,9.5 H9.5 M5,11.5 H9" stroke="#000" stroke-width="0.7"/><rect x="0" y="7" width="1.6" height="7" fill="#3A7CC8"/></svg>
<div class="t" style="left:45px;top:456px;font-size:10.8px;color:#111">Nachweise</div>
<div class="a" style="left:35px;top:478px;width:8px;height:1px;background-image:repeating-linear-gradient(90deg,#A0A0A0 0 1px,transparent 1px 2px)"></div>
<svg class="a" style="left:44px;top:471px" width="16" height="16" viewBox="0 0 16 16"><rect x="0" y="0" width="3" height="15" fill="#333"/><rect x="3" y="0" width="5" height="15" fill="#C62028"/><rect x="8" y="2" width="3" height="13" fill="#FFD21E"/><rect x="6.5" y="8.5" width="8" height="8" fill="#3B6FB6"/><path d="M7.5,10.5 L9,14.5 L10.5,11.5 L12,14.5 L13.5,10.5" stroke="#fff" stroke-width="1" fill="none"/><path d="M7,9.5 H14" stroke="#9fb8e0" stroke-width="0.8" stroke-dasharray="1,1"/></svg>
<div class="t" style="left:64px;top:474px;font-size:10.8px;color:#111">Bauteilnachweis</div>
<div class="a" style="left:35px;top:496px;width:8px;height:1px;background-image:repeating-linear-gradient(90deg,#A0A0A0 0 1px,transparent 1px 2px)"></div>
<svg class="a" style="left:44px;top:489px" width="16" height="16" viewBox="0 0 16 16"><rect x="1" y="0.5" width="10.5" height="13" fill="#fff" stroke="#000" stroke-width="1.2"/><path d="M3,3 H9.5" stroke="#000" stroke-width="1.6"/><path d="M3,5.5 H4 M5,5.5 H9.5 M3,8 H4 M5,8 H9.5 M3,10.5 H4 M5,10.5 H7" stroke="#000" stroke-width="1"/><rect x="6.5" y="8.5" width="8" height="8" fill="#3B6FB6"/><path d="M7.5,10.5 L9,14.5 L10.5,11.5 L12,14.5 L13.5,10.5" stroke="#fff" stroke-width="1" fill="none"/><path d="M7,9.5 H14" stroke="#9fb8e0" stroke-width="0.8" stroke-dasharray="1,1"/></svg>
<div class="t" style="left:64px;top:492px;font-size:10.8px;color:#111">Berechnungsdokumentation GEG/EnEV ...</div>
<div class="a" style="left:35px;top:514px;width:8px;height:1px;background-image:repeating-linear-gradient(90deg,#A0A0A0 0 1px,transparent 1px 2px)"></div>
<svg class="a" style="left:44px;top:507px" width="16" height="16" viewBox="0 0 16 16"><rect x="1.5" y="0.5" width="12" height="15" fill="#fff" stroke="#000"/><path d="M3,4 H5 M3,6 H6 M3,8 H7 M3,10 H8 M3,12 H9" stroke-width="2" stroke="#4F9A0C"/><rect x="3" y="6" width="3" height="2" fill="#C8D82A"/><rect x="3" y="8" width="4" height="2" fill="#FFD21E"/><rect x="3" y="10" width="5" height="2" fill="#F08A30"/><rect x="3" y="12" width="6" height="2" fill="#D0202A"/></svg>
<div class="t" style="left:64px;top:510px;font-size:10.8px;color:#111">Energieausweis</div>
<div class="a" style="left:35px;top:532px;width:8px;height:1px;background-image:repeating-linear-gradient(90deg,#A0A0A0 0 1px,transparent 1px 2px)"></div>
<svg class="a" style="left:44px;top:525px" width="16" height="16" viewBox="0 0 16 16"><rect x="1" y="0.5" width="10.5" height="13" fill="#fff" stroke="#000" stroke-width="1.2"/><path d="M3,3 H9.5" stroke="#000" stroke-width="1.6"/><path d="M3,5.5 H4 M5,5.5 H9.5 M3,8 H4 M5,8 H9.5 M3,10.5 H4 M5,10.5 H7" stroke="#000" stroke-width="1"/><rect x="6.5" y="8.5" width="8" height="8" fill="#3B6FB6"/><path d="M7.5,10.5 L9,14.5 L10.5,11.5 L12,14.5 L13.5,10.5" stroke="#fff" stroke-width="1" fill="none"/><path d="M7,9.5 H14" stroke="#9fb8e0" stroke-width="0.8" stroke-dasharray="1,1"/></svg>
<div class="t" style="left:64px;top:528px;font-size:10.8px;color:#111">Erfüllungsnachweis (GEG)</div>
<div class="a" style="left:35px;top:550px;width:8px;height:1px;background-image:repeating-linear-gradient(90deg,#A0A0A0 0 1px,transparent 1px 2px)"></div>
<svg class="a" style="left:30px;top:546px" width="9" height="9" viewBox="0 0 9 9"><rect x="0.5" y="0.5" width="8" height="8" rx="1" fill="#fff" stroke="#A0A0A0"/><path d="M2,4.5 H7 M4.5,2 V7" stroke="#3050A0"/></svg>
<svg class="a" style="left:44px;top:543px" width="16" height="16" viewBox="0 0 16 16"><path d="M0,1 H10 L12,3 L8,5 L5,9 L2,9 L0,11 Z" fill="#888"/><path d="M0,14 L5,9 H11 L16,15 H9 Z" fill="#C62028"/><path d="M0,15 L5,10" stroke="#000" stroke-width="1.5"/></svg>
<div class="t" style="left:64px;top:546px;font-size:10.8px;color:#111">GEG Heizungsbewertung</div>
<div class="a" style="left:35px;top:568px;width:8px;height:1px;background-image:repeating-linear-gradient(90deg,#A0A0A0 0 1px,transparent 1px 2px)"></div>
<svg class="a" style="left:44px;top:561px" width="16" height="16" viewBox="0 0 16 16"><rect x="0.5" y="0.5" width="13" height="14" fill="#fff" stroke="#2A6DB5" stroke-width="1.5"/><rect x="3" y="3" width="8" height="9" fill="none" stroke="#2A6DB5"/><rect x="8" y="8" width="8" height="8" fill="#D0202A"/><path d="M9.5,14.5 L12,10 L14.5,14.5" stroke="#fff" fill="none"/></svg>
<div class="t" style="left:64px;top:564px;font-size:10.8px;color:#111">Heizlast (DIN 12831) (Ist-Zustand)</div>
<div class="a" style="left:35px;top:586px;width:8px;height:1px;background-image:repeating-linear-gradient(90deg,#A0A0A0 0 1px,transparent 1px 2px)"></div>
<svg class="a" style="left:30px;top:582px" width="9" height="9" viewBox="0 0 9 9"><rect x="0.5" y="0.5" width="8" height="8" rx="1" fill="#fff" stroke="#A0A0A0"/><path d="M2,4.5 H7 M4.5,2 V7" stroke="#3050A0"/></svg>
<svg class="a" style="left:44px;top:579px" width="16" height="16" viewBox="0 0 16 16"><rect x="0" y="0" width="15" height="15" fill="#E8892E"/><path d="M3.5,2.5 H11.5 V4.5 M11,12.5 H3.5 L7.5,7.5 L3.5,2.5" fill="none" stroke="#fff" stroke-width="1.8"/></svg>
<div class="t" style="left:64px;top:582px;font-size:10.8px;color:#111">Kennwerte (GEG/EnEV)</div>
<div class="a" style="left:35px;top:604px;width:8px;height:1px;background-image:repeating-linear-gradient(90deg,#A0A0A0 0 1px,transparent 1px 2px)"></div>
<svg class="a" style="left:30px;top:600px" width="9" height="9" viewBox="0 0 9 9"><rect x="0.5" y="0.5" width="8" height="8" rx="1" fill="#fff" stroke="#A0A0A0"/><path d="M2,4.5 H7 M4.5,2 V7" stroke="#3050A0"/></svg>
<svg class="a" style="left:44px;top:597px" width="16" height="16" viewBox="0 0 16 16"><rect x="0" y="0" width="15" height="15" fill="#8A8A8A"/><path d="M3.5,2.5 H11.5 V4.5 M11,12.5 H3.5 L7.5,7.5 L3.5,2.5" fill="none" stroke="#fff" stroke-width="1.8"/></svg>
<div class="t" style="left:64px;top:600px;font-size:10.8px;color:#111">Kennwerte (Referenzgebäude)</div>
<div class="a" style="left:35px;top:622px;width:8px;height:1px;background-image:repeating-linear-gradient(90deg,#A0A0A0 0 1px,transparent 1px 2px)"></div>
<svg class="a" style="left:30px;top:618px" width="9" height="9" viewBox="0 0 9 9"><rect x="0.5" y="0.5" width="8" height="8" rx="1" fill="#fff" stroke="#A0A0A0"/><path d="M2,4.5 H7 M4.5,2 V7" stroke="#3050A0"/></svg>
<svg class="a" style="left:44px;top:615px" width="16" height="16" viewBox="0 0 16 16"><rect x="0" y="0" width="15" height="15" fill="#3E86BF"/><path d="M3.5,2.5 H11.5 V4.5 M11,12.5 H3.5 L7.5,7.5 L3.5,2.5" fill="none" stroke="#fff" stroke-width="1.8"/></svg>
<div class="t" style="left:64px;top:618px;font-size:10.8px;color:#111">Kennwerte (individuelle Randbedingungen)</div>
<div class="a" style="left:35px;top:640px;width:8px;height:1px;background-image:repeating-linear-gradient(90deg,#A0A0A0 0 1px,transparent 1px 2px)"></div>
<svg class="a" style="left:44px;top:633px" width="16" height="16" viewBox="0 0 16 16"><rect x="0" y="0" width="15" height="15" fill="#5AAE2A"/><path d="M3,12 V6 L7.5,2 L12,6 V12 Z" fill="none" stroke="#fff"/><rect x="6.5" y="8.5" width="8" height="8" fill="#3B6FB6"/><path d="M7.5,10.5 L9,14.5 L10.5,11.5 L12,14.5 L13.5,10.5" stroke="#fff" stroke-width="1" fill="none"/><path d="M7,9.5 H14" stroke="#9fb8e0" stroke-width="0.8" stroke-dasharray="1,1"/></svg>
<div class="t" style="left:64px;top:636px;font-size:10.8px;color:#111">Nachhaltigkeit Ökobilanz</div>
<div class="a" style="left:35px;top:658px;width:8px;height:1px;background-image:repeating-linear-gradient(90deg,#A0A0A0 0 1px,transparent 1px 2px)"></div>
<svg class="a" style="left:44px;top:651px" width="16" height="16" viewBox="0 0 16 16"><path d="M1,15 C2,6 7,2 15,0 C14,8 9,12 3,12" fill="#7CC242"/><path d="M1,15 L11,4" stroke="#3E8A1E"/><rect x="6.5" y="8.5" width="8" height="8" fill="#3B6FB6"/><path d="M7.5,10.5 L9,14.5 L10.5,11.5 L12,14.5 L13.5,10.5" stroke="#fff" stroke-width="1" fill="none"/><path d="M7,9.5 H14" stroke="#9fb8e0" stroke-width="0.8" stroke-dasharray="1,1"/></svg>
<div class="t" style="left:64px;top:654px;font-size:10.8px;color:#111">Nachweis EWärmeG BW</div>
<div class="a" style="left:35px;top:676px;width:8px;height:1px;background-image:repeating-linear-gradient(90deg,#A0A0A0 0 1px,transparent 1px 2px)"></div>
<svg class="a" style="left:44px;top:669px" width="16" height="16" viewBox="0 0 16 16"><circle cx="4" cy="2" r="2" fill="#111"/><rect x="1" y="4" width="6" height="11" fill="#111"/><circle cx="11" cy="3" r="2.5" fill="none" stroke="#555"/><rect x="7" y="8" width="9" height="8" fill="#D0202A"/><path d="M9,15 L11.5,10 L14,15" stroke="#fff" fill="none"/></svg>
<div class="t" style="left:64px;top:672px;font-size:10.8px;color:#111">Nutzungsprofile</div>
<div class="a" style="left:35px;top:694px;width:8px;height:1px;background-image:repeating-linear-gradient(90deg,#A0A0A0 0 1px,transparent 1px 2px)"></div>
<svg class="a" style="left:44px;top:687px" width="16" height="16" viewBox="0 0 16 16"><rect x="0" y="0" width="15" height="15" fill="#FFD21E"/><circle cx="6" cy="6" r="3" fill="#fff"/><rect x="7" y="7" width="9" height="9" fill="#D0202A"/><path d="M9,15 L11.5,10 L14,15" stroke="#fff" fill="none"/></svg>
<div class="t" style="left:64px;top:690px;font-size:10.8px;color:#111">Sommerlicher Wärmeschutz (DIN 4108-2, 8.3, Sonneneintrag)</div>
<div class="a" style="left:35px;top:712px;width:8px;height:1px;background-image:repeating-linear-gradient(90deg,#A0A0A0 0 1px,transparent 1px 2px)"></div>
<svg class="a" style="left:44px;top:705px" width="16" height="16" viewBox="0 0 16 16"><circle cx="5" cy="4" r="2" fill="#F08A30"/><path d="M5,0 V1 M1,4 H2 M8,4 H9" stroke="#F08A30"/><rect x="2" y="12" width="3" height="4" fill="#F08A30"/><rect x="6" y="10" width="3" height="6" fill="#D06020"/><rect x="10" y="13" width="3" height="3" fill="#F08A30"/></svg>
<div class="t" style="left:64px;top:708px;font-size:10.8px;color:#111">Sommerlicher Wärmeschutz Simulation (DIN 4108-2, 8.4, Überhitzung)</div>
<div class="a" style="left:19px;top:730px;width:4px;height:1px;background-image:repeating-linear-gradient(90deg,#A0A0A0 0 1px,transparent 1px 2px)"></div>
<svg class="a" style="left:11px;top:726px" width="9" height="9" viewBox="0 0 9 9"><rect x="0.5" y="0.5" width="8" height="8" rx="1" fill="#fff" stroke="#A0A0A0"/><path d="M2,4.5 H7 M4.5,2 V7" stroke="#3050A0"/></svg>
<svg class="a" style="left:24px;top:723px" width="16" height="16" viewBox="0 0 16 16"><path d="M2.5,1 V13.5 H16 M2.5,1 H16" fill="none" stroke="#000" stroke-width="1.1"/><path d="M0,5.3 H16 M0,9.5 H16" stroke="#999" stroke-width="0.8"/><rect x="4" y="5" width="3.2" height="8" fill="#C8141E"/><rect x="4" y="5" width="3.2" height="1" fill="#111"/><rect x="8" y="8.5" width="3.2" height="4.5" fill="#FFD21E"/><rect x="8" y="8.5" width="3.2" height="1" fill="#111"/><rect x="12" y="3" width="3.2" height="10" fill="#0B3F96"/><rect x="12" y="3" width="3.2" height="1" fill="#111"/><path d="M4,15.5 H6.3 M8,15.5 H10.3 M12,15.5 H14.3" stroke="#000" stroke-width="1.2"/></svg>
<div class="t" style="left:45px;top:726px;font-size:10.8px;color:#111">Vergleichsgrafiken Sanierungsfahrplan</div>
<div class="a" style="left:19px;top:748px;width:4px;height:1px;background-image:repeating-linear-gradient(90deg,#A0A0A0 0 1px,transparent 1px 2px)"></div>
<svg class="a" style="left:11px;top:744px" width="9" height="9" viewBox="0 0 9 9"><rect x="0.5" y="0.5" width="8" height="8" rx="1" fill="#fff" stroke="#A0A0A0"/><path d="M2,4.5 H7 M4.5,2 V7" stroke="#3050A0"/></svg>
<svg class="a" style="left:24px;top:741px" width="16" height="16" viewBox="0 0 16 16"><path d="M2.5,1 V13.5 H16 M2.5,1 H16" fill="none" stroke="#000" stroke-width="1.1"/><path d="M0,5.3 H16 M0,9.5 H16" stroke="#999" stroke-width="0.8"/><rect x="4" y="5" width="3.2" height="8" fill="#C8141E"/><rect x="4" y="5" width="3.2" height="1" fill="#111"/><rect x="8" y="8.5" width="3.2" height="4.5" fill="#FFD21E"/><rect x="8" y="8.5" width="3.2" height="1" fill="#111"/><rect x="12" y="3" width="3.2" height="10" fill="#0B3F96"/><rect x="12" y="3" width="3.2" height="1" fill="#111"/><path d="M4,15.5 H6.3 M8,15.5 H10.3 M12,15.5 H14.3" stroke="#000" stroke-width="1.2"/></svg>
<div class="t" style="left:45px;top:744px;font-size:10.8px;color:#111">Vergleichsgrafiken weitere Varianten</div>
</div>
<div class="a" style="left:375px;top:96px;width:1318px;height:1060px;background:#fff"></div>
<div class="a" style="left:1692px;top:1086px;width:1px;height:70px;background:#E2E2E2"></div>
<div class="a" style="left:1693px;top:96px;width:3px;height:1060px;background:#EFEFEF"></div>
<svg class="a" style="left:379px;top:77px" width="14" height="14" viewBox="0 0 14 14"><rect x="0" y="0" width="14" height="14" fill="#0b0b14"/><rect x="2" y="0" width="10" height="1.8" fill="#C8141E"/><rect x="2" y="1.8" width="10" height="5.2" fill="#fff"/><rect x="12.3" y="0.5" width="1.2" height="1.5" fill="#888"/><rect x="5" y="9" width="7" height="5" fill="#ddd"/><rect x="6" y="10" width="2.5" height="3" fill="#0b0b14"/><rect x="10" y="9" width="1" height="5" fill="#bbb"/></svg>
<svg class="a" style="left:404px;top:76px" width="15" height="17" viewBox="0 0 15 17"><rect x="0.5" y="1.5" width="11" height="13" fill="#FFF7B0" stroke="#F5CC30" stroke-width="1"/><rect x="2" y="0" width="7" height="3" rx="1" fill="#8A8A9A"/><path d="M3.5,6.5 H9.5 L13.5,10 V16 H3.5 Z" fill="#fff" stroke="#111" stroke-width="1.4"/><path d="M5,9 H8 M5,11.5 H12 M5,14 H12" stroke="#111" stroke-width="1.2"/><path d="M9.5,6.5 V10 H13.5" fill="#888"/></svg>
<svg class="a" style="left:428px;top:76px" width="15" height="16" viewBox="0 0 15 16"><path d="M4.5,1 H10 L12,3 V8.5 H4.5 Z" fill="#B8B8B8" stroke="#999" stroke-width="0.6"/><path d="M7,3 L9,6 M8.5,5 V8" stroke="#fff" stroke-width="1.2"/><rect x="0.5" y="8.5" width="14" height="6.5" rx="1" fill="#7a7a7a"/><path d="M1.5,10.5 H13.5" stroke="#d0d0d0" stroke-width="1.2"/><path d="M1.5,13 H13.5" stroke="#aaa" stroke-width="0.8"/><rect x="12" y="10" width="1" height="1" fill="#d33"/></svg>
<div class="t" style="left:809px;top:76px;font-size:17px;font-weight:bold;letter-spacing:0.15px;color:#0f0f3a">Amortisationszeit der Variante Sanierung in einem Zug</div>
<div class="a" style="left:1524px;top:75px;width:166px;height:18px;background:#fff;border:1px solid #E6E6E6;border-bottom:none;overflow:hidden"><div class="t" style="left:4px;top:6px;font-size:15px;color:#222">individuelle Randbec</div></div>
<svg class="a" style="left:1674px;top:86px;z-index:2" width="11" height="7" viewBox="0 0 11 7"><path d="M1,1 L5.5,5.5 L10,1" fill="none" stroke="#555" stroke-width="1"/></svg>
<div class="a" style="left:1694px;top:68px;width:242px;height:29px;border:4px solid #FF0000;background:#fbfbfb;z-index:5"></div>
<div class="t" style="left:1699px;top:77px;font-size:10.6px;color:#111;z-index:6">Sanierung in einem Zug (5)</div>
<svg class="a" style="left:1918px;top:79px;z-index:6" width="11" height="7" viewBox="0 0 11 7"><path d="M1,1 L5.5,5.5 L10,1" fill="none" stroke="#555" stroke-width="1"/></svg>
<svg class="a" style="left:1937px;top:74px" width="19" height="19" viewBox="0 0 19 19"><rect x="0" y="0" width="19" height="19" rx="1" fill="#eee"/><rect x="1" y="1" width="16" height="16" fill="#0B3F96"/><path d="M4.5,13.5 L12.5,5.5" stroke="#fff" stroke-width="3.4"/><path d="M13.5,4.5 L14.8,3.2" stroke="#fff" stroke-width="2.6" stroke-linecap="round"/><path d="M2.5,15.5 L3,12.5 L5.5,15 Z" fill="#fff"/></svg>
<svg class="a" style="left:0;top:0" width="1956" height="1156" viewBox="0 0 1956 1156">
<line x1="454" y1="914.00" x2="1654" y2="914.00" stroke="#D9D9D9" stroke-width="2"/>
<line x1="454" y1="914.00" x2="459" y2="914.00" stroke="#B0B0B0" stroke-width="2"/>
<line x1="454" y1="893.14" x2="1654" y2="893.14" stroke="#D9D9D9" stroke-width="2"/>
<line x1="454" y1="893.14" x2="459" y2="893.14" stroke="#B0B0B0" stroke-width="2"/>
<line x1="454" y1="872.28" x2="1654" y2="872.28" stroke="#D9D9D9" stroke-width="2"/>
<line x1="454" y1="872.28" x2="459" y2="872.28" stroke="#B0B0B0" stroke-width="2"/>
<line x1="454" y1="851.42" x2="1654" y2="851.42" stroke="#D9D9D9" stroke-width="2"/>
<line x1="454" y1="851.42" x2="459" y2="851.42" stroke="#B0B0B0" stroke-width="2"/>
<line x1="454" y1="830.56" x2="1654" y2="830.56" stroke="#D9D9D9" stroke-width="2"/>
<line x1="454" y1="830.56" x2="459" y2="830.56" stroke="#B0B0B0" stroke-width="2"/>
<line x1="454" y1="809.69" x2="1654" y2="809.69" stroke="#D9D9D9" stroke-width="2"/>
<line x1="454" y1="809.69" x2="459" y2="809.69" stroke="#B0B0B0" stroke-width="2"/>
<line x1="454" y1="788.83" x2="1654" y2="788.83" stroke="#D9D9D9" stroke-width="2"/>
<line x1="454" y1="788.83" x2="459" y2="788.83" stroke="#B0B0B0" stroke-width="2"/>
<line x1="454" y1="767.97" x2="1654" y2="767.97" stroke="#D9D9D9" stroke-width="2"/>
<line x1="454" y1="767.97" x2="459" y2="767.97" stroke="#B0B0B0" stroke-width="2"/>
<line x1="454" y1="747.11" x2="1654" y2="747.11" stroke="#D9D9D9" stroke-width="2"/>
<line x1="454" y1="747.11" x2="459" y2="747.11" stroke="#B0B0B0" stroke-width="2"/>
<line x1="454" y1="726.25" x2="1654" y2="726.25" stroke="#D9D9D9" stroke-width="2"/>
<line x1="454" y1="726.25" x2="459" y2="726.25" stroke="#B0B0B0" stroke-width="2"/>
<line x1="454" y1="705.39" x2="1654" y2="705.39" stroke="#D9D9D9" stroke-width="2"/>
<line x1="454" y1="705.39" x2="459" y2="705.39" stroke="#B0B0B0" stroke-width="2"/>
<line x1="454" y1="684.53" x2="1654" y2="684.53" stroke="#D9D9D9" stroke-width="2"/>
<line x1="454" y1="684.53" x2="459" y2="684.53" stroke="#B0B0B0" stroke-width="2"/>
<line x1="454" y1="663.67" x2="1654" y2="663.67" stroke="#D9D9D9" stroke-width="2"/>
<line x1="454" y1="663.67" x2="459" y2="663.67" stroke="#B0B0B0" stroke-width="2"/>
<line x1="454" y1="642.81" x2="1654" y2="642.81" stroke="#D9D9D9" stroke-width="2"/>
<line x1="454" y1="642.81" x2="459" y2="642.81" stroke="#B0B0B0" stroke-width="2"/>
<line x1="454" y1="621.94" x2="1654" y2="621.94" stroke="#D9D9D9" stroke-width="2"/>
<line x1="454" y1="621.94" x2="459" y2="621.94" stroke="#B0B0B0" stroke-width="2"/>
<line x1="454" y1="601.08" x2="1654" y2="601.08" stroke="#D9D9D9" stroke-width="2"/>
<line x1="454" y1="601.08" x2="459" y2="601.08" stroke="#B0B0B0" stroke-width="2"/>
<line x1="454" y1="580.22" x2="1654" y2="580.22" stroke="#D9D9D9" stroke-width="2"/>
<line x1="454" y1="580.22" x2="459" y2="580.22" stroke="#B0B0B0" stroke-width="2"/>
<line x1="454" y1="559.36" x2="1654" y2="559.36" stroke="#D9D9D9" stroke-width="2"/>
<line x1="454" y1="559.36" x2="459" y2="559.36" stroke="#B0B0B0" stroke-width="2"/>
<line x1="454" y1="538.50" x2="1654" y2="538.50" stroke="#D9D9D9" stroke-width="2"/>
<line x1="454" y1="538.50" x2="459" y2="538.50" stroke="#B0B0B0" stroke-width="2"/>
<line x1="454" y1="517.64" x2="1654" y2="517.64" stroke="#D9D9D9" stroke-width="2"/>
<line x1="454" y1="517.64" x2="459" y2="517.64" stroke="#B0B0B0" stroke-width="2"/>
<line x1="454" y1="496.78" x2="1654" y2="496.78" stroke="#D9D9D9" stroke-width="2"/>
<line x1="454" y1="496.78" x2="459" y2="496.78" stroke="#B0B0B0" stroke-width="2"/>
<line x1="454" y1="475.92" x2="1654" y2="475.92" stroke="#D9D9D9" stroke-width="2"/>
<line x1="454" y1="475.92" x2="459" y2="475.92" stroke="#B0B0B0" stroke-width="2"/>
<line x1="454" y1="455.06" x2="1654" y2="455.06" stroke="#D9D9D9" stroke-width="2"/>
<line x1="454" y1="455.06" x2="459" y2="455.06" stroke="#B0B0B0" stroke-width="2"/>
<line x1="454" y1="434.19" x2="1654" y2="434.19" stroke="#D9D9D9" stroke-width="2"/>
<line x1="454" y1="434.19" x2="459" y2="434.19" stroke="#B0B0B0" stroke-width="2"/>
<line x1="454" y1="413.33" x2="1654" y2="413.33" stroke="#D9D9D9" stroke-width="2"/>
<line x1="454" y1="413.33" x2="459" y2="413.33" stroke="#B0B0B0" stroke-width="2"/>
<line x1="454" y1="392.47" x2="1654" y2="392.47" stroke="#D9D9D9" stroke-width="2"/>
<line x1="454" y1="392.47" x2="459" y2="392.47" stroke="#B0B0B0" stroke-width="2"/>
<line x1="454" y1="371.61" x2="1654" y2="371.61" stroke="#D9D9D9" stroke-width="2"/>
<line x1="454" y1="371.61" x2="459" y2="371.61" stroke="#B0B0B0" stroke-width="2"/>
<line x1="454" y1="350.75" x2="1654" y2="350.75" stroke="#D9D9D9" stroke-width="2"/>
<line x1="454" y1="350.75" x2="459" y2="350.75" stroke="#B0B0B0" stroke-width="2"/>
<line x1="454" y1="329.89" x2="1654" y2="329.89" stroke="#D9D9D9" stroke-width="2"/>
<line x1="454" y1="329.89" x2="459" y2="329.89" stroke="#B0B0B0" stroke-width="2"/>
<line x1="454" y1="309.03" x2="1654" y2="309.03" stroke="#D9D9D9" stroke-width="2"/>
<line x1="454" y1="309.03" x2="459" y2="309.03" stroke="#B0B0B0" stroke-width="2"/>
<line x1="454" y1="288.17" x2="1654" y2="288.17" stroke="#D9D9D9" stroke-width="2"/>
<line x1="454" y1="288.17" x2="459" y2="288.17" stroke="#B0B0B0" stroke-width="2"/>
<line x1="454" y1="267.31" x2="1654" y2="267.31" stroke="#D9D9D9" stroke-width="2"/>
<line x1="454" y1="267.31" x2="459" y2="267.31" stroke="#B0B0B0" stroke-width="2"/>
<line x1="454" y1="246.44" x2="1654" y2="246.44" stroke="#D9D9D9" stroke-width="2"/>
<line x1="454" y1="246.44" x2="459" y2="246.44" stroke="#B0B0B0" stroke-width="2"/>
<line x1="454" y1="225.58" x2="1654" y2="225.58" stroke="#D9D9D9" stroke-width="2"/>
<line x1="454" y1="225.58" x2="459" y2="225.58" stroke="#B0B0B0" stroke-width="2"/>
<line x1="454" y1="204.72" x2="1654" y2="204.72" stroke="#D9D9D9" stroke-width="2"/>
<line x1="454" y1="204.72" x2="459" y2="204.72" stroke="#B0B0B0" stroke-width="2"/>
<line x1="454" y1="183.86" x2="1654" y2="183.86" stroke="#D9D9D9" stroke-width="2"/>
<line x1="454" y1="183.86" x2="459" y2="183.86" stroke="#B0B0B0" stroke-width="2"/>
<line x1="454" y1="163.00" x2="1654" y2="163.00" stroke="#D9D9D9" stroke-width="2"/>
<line x1="454" y1="163.00" x2="459" y2="163.00" stroke="#B0B0B0" stroke-width="2"/>
<line x1="462.50" y1="918" x2="462.50" y2="923" stroke="#B0B0B0" stroke-width="1.5"/>
<line x1="570.68" y1="918" x2="570.68" y2="923" stroke="#B0B0B0" stroke-width="1.5"/>
<line x1="678.86" y1="918" x2="678.86" y2="923" stroke="#B0B0B0" stroke-width="1.5"/>
<line x1="787.04" y1="918" x2="787.04" y2="923" stroke="#B0B0B0" stroke-width="1.5"/>
<line x1="895.22" y1="918" x2="895.22" y2="923" stroke="#B0B0B0" stroke-width="1.5"/>
<line x1="1003.40" y1="918" x2="1003.40" y2="923" stroke="#B0B0B0" stroke-width="1.5"/>
<line x1="1111.58" y1="918" x2="1111.58" y2="923" stroke="#B0B0B0" stroke-width="1.5"/>
<line x1="1219.76" y1="918" x2="1219.76" y2="923" stroke="#B0B0B0" stroke-width="1.5"/>
<line x1="1327.94" y1="918" x2="1327.94" y2="923" stroke="#B0B0B0" stroke-width="1.5"/>
<line x1="1436.12" y1="918" x2="1436.12" y2="923" stroke="#B0B0B0" stroke-width="1.5"/>
<line x1="1544.30" y1="918" x2="1544.30" y2="923" stroke="#B0B0B0" stroke-width="1.5"/>
<line x1="1652.48" y1="918" x2="1652.48" y2="923" stroke="#B0B0B0" stroke-width="1.5"/>
<polyline points="462.50,525.46 570.68,582.08 678.86,620.74 787.04,649.26 895.22,671.38 1003.40,689.16 1111.58,703.84 1219.76,716.20 1327.94,726.79 1436.12,735.99 1544.30,744.06 1652.48,751.21" fill="none" stroke="#E8832A" stroke-width="2" stroke-linejoin="miter"/>
<polyline points="462.50,425.50 570.68,521.58 678.86,578.78 787.04,617.84 895.22,646.65 1003.40,669.00 1111.58,686.97 1219.76,701.80 1327.94,714.29 1436.12,724.99 1544.30,734.28 1652.48,742.44" fill="none" stroke="#0A3D8F" stroke-width="2" stroke-linejoin="miter"/>
<polyline points="462.50,194.23 570.68,420.64 678.86,517.69 787.04,575.48 895.22,614.94 1003.40,644.04 1111.58,666.62 1219.76,684.78 1327.94,699.76 1436.12,712.38 1544.30,723.19 1652.48,732.58" fill="none" stroke="#FFD21E" stroke-width="2" stroke-linejoin="miter"/>
<polyline points="462.50,914.00 570.68,187.11 678.86,415.78 787.04,513.81 895.22,572.18 1003.40,612.03 1111.58,641.43 1219.76,664.25 1327.94,682.58 1436.12,697.72 1544.30,710.47 1652.48,721.39" fill="none" stroke="#4F9A0C" stroke-width="2" stroke-linejoin="miter"/>
<polyline points="462.50,914.00 570.68,914.00 678.86,179.98 787.04,410.92 895.22,509.92 1003.40,568.87 1111.58,609.13 1219.76,638.83 1327.94,661.87 1436.12,680.39 1544.30,695.67 1652.48,708.55" fill="none" stroke="#BD1F2A" stroke-width="2" stroke-linejoin="miter"/>
<polyline points="462.50,914.00 570.68,914.00 678.86,914.00 787.04,172.85 895.22,406.05 1003.40,506.03 1111.58,565.57 1219.76,606.22 1327.94,636.22 1436.12,659.49 1544.30,678.19 1652.48,693.63" fill="none" stroke="#3A84BF" stroke-width="2" stroke-linejoin="miter"/>
<polyline points="462.50,914.00 570.68,914.00 678.86,914.00 787.04,914.00 895.22,165.73 1003.40,401.19 1111.58,502.15 1219.76,562.27 1327.94,603.32 1436.12,633.61 1544.30,657.11 1652.48,676.00" fill="none" stroke="#9FD12C" stroke-width="2" stroke-linejoin="miter"/>
<polyline points="462.50,914.00 570.68,914.00 678.86,914.00 787.04,914.00 895.22,914.00 1003.40,158.60 1111.58,396.33 1219.76,498.26 1327.94,558.97 1436.12,600.42 1544.30,631.00 1652.48,654.73" fill="none" stroke="#7A4B3A" stroke-width="2" stroke-linejoin="miter"/>
<line x1="460" y1="155" x2="1656" y2="155" stroke="#777" stroke-width="2" transform="translate(0,1)"/>
<line x1="1655" y1="155" x2="1655" y2="918" stroke="#777" stroke-width="2"/>
<line x1="460" y1="156" x2="460" y2="918" stroke="#000" stroke-width="2.2"/>
<line x1="459" y1="917" x2="1656" y2="917" stroke="#000" stroke-width="2.2"/>
</svg>
<div class="t" style="left:400px;width:50px;text-align:right;top:907.0px;font-size:13px;color:#111">0</div>
<div class="t" style="left:400px;width:50px;text-align:right;top:886.1px;font-size:13px;color:#111">2</div>
<div class="t" style="left:400px;width:50px;text-align:right;top:865.3px;font-size:13px;color:#111">4</div>
<div class="t" style="left:400px;width:50px;text-align:right;top:844.4px;font-size:13px;color:#111">6</div>
<div class="t" style="left:400px;width:50px;text-align:right;top:823.6px;font-size:13px;color:#111">8</div>
<div class="t" style="left:400px;width:50px;text-align:right;top:802.7px;font-size:13px;color:#111">10</div>
<div class="t" style="left:400px;width:50px;text-align:right;top:781.8px;font-size:13px;color:#111">12</div>
<div class="t" style="left:400px;width:50px;text-align:right;top:761.0px;font-size:13px;color:#111">14</div>
<div class="t" style="left:400px;width:50px;text-align:right;top:740.1px;font-size:13px;color:#111">16</div>
<div class="t" style="left:400px;width:50px;text-align:right;top:719.2px;font-size:13px;color:#111">18</div>
<div class="t" style="left:400px;width:50px;text-align:right;top:698.4px;font-size:13px;color:#111">20</div>
<div class="t" style="left:400px;width:50px;text-align:right;top:677.5px;font-size:13px;color:#111">22</div>
<div class="t" style="left:400px;width:50px;text-align:right;top:656.7px;font-size:13px;color:#111">24</div>
<div class="t" style="left:400px;width:50px;text-align:right;top:635.8px;font-size:13px;color:#111">26</div>
<div class="t" style="left:400px;width:50px;text-align:right;top:614.9px;font-size:13px;color:#111">28</div>
<div class="t" style="left:400px;width:50px;text-align:right;top:594.1px;font-size:13px;color:#111">30</div>
<div class="t" style="left:400px;width:50px;text-align:right;top:573.2px;font-size:13px;color:#111">32</div>
<div class="t" style="left:400px;width:50px;text-align:right;top:552.4px;font-size:13px;color:#111">34</div>
<div class="t" style="left:400px;width:50px;text-align:right;top:531.5px;font-size:13px;color:#111">36</div>
<div class="t" style="left:400px;width:50px;text-align:right;top:510.6px;font-size:13px;color:#111">38</div>
<div class="t" style="left:400px;width:50px;text-align:right;top:489.8px;font-size:13px;color:#111">40</div>
<div class="t" style="left:400px;width:50px;text-align:right;top:468.9px;font-size:13px;color:#111">42</div>
<div class="t" style="left:400px;width:50px;text-align:right;top:448.1px;font-size:13px;color:#111">44</div>
<div class="t" style="left:400px;width:50px;text-align:right;top:427.2px;font-size:13px;color:#111">46</div>
<div class="t" style="left:400px;width:50px;text-align:right;top:406.3px;font-size:13px;color:#111">48</div>
<div class="t" style="left:400px;width:50px;text-align:right;top:385.5px;font-size:13px;color:#111">50</div>
<div class="t" style="left:400px;width:50px;text-align:right;top:364.6px;font-size:13px;color:#111">52</div>
<div class="t" style="left:400px;width:50px;text-align:right;top:343.8px;font-size:13px;color:#111">54</div>
<div class="t" style="left:400px;width:50px;text-align:right;top:322.9px;font-size:13px;color:#111">56</div>
<div class="t" style="left:400px;width:50px;text-align:right;top:302.0px;font-size:13px;color:#111">58</div>
<div class="t" style="left:400px;width:50px;text-align:right;top:281.2px;font-size:13px;color:#111">60</div>
<div class="t" style="left:400px;width:50px;text-align:right;top:260.3px;font-size:13px;color:#111">62</div>
<div class="t" style="left:400px;width:50px;text-align:right;top:239.4px;font-size:13px;color:#111">64</div>
<div class="t" style="left:400px;width:50px;text-align:right;top:218.6px;font-size:13px;color:#111">66</div>
<div class="t" style="left:400px;width:50px;text-align:right;top:197.7px;font-size:13px;color:#111">68</div>
<div class="t" style="left:400px;width:50px;text-align:right;top:176.9px;font-size:13px;color:#111">70</div>
<div class="t" style="left:400px;width:50px;text-align:right;top:156.0px;font-size:13px;color:#111">72</div>
<div class="t" style="left:434.5px;width:60px;text-align:center;top:927px;font-size:13px;color:#111">0 %</div>
<div class="t" style="left:542.7px;width:60px;text-align:center;top:927px;font-size:13px;color:#111">1 %</div>
<div class="t" style="left:650.9px;width:60px;text-align:center;top:927px;font-size:13px;color:#111">2 %</div>
<div class="t" style="left:759.0px;width:60px;text-align:center;top:927px;font-size:13px;color:#111">3 %</div>
<div class="t" style="left:867.2px;width:60px;text-align:center;top:927px;font-size:13px;color:#111">4 %</div>
<div class="t" style="left:975.4px;width:60px;text-align:center;top:927px;font-size:13px;color:#111">5 %</div>
<div class="t" style="left:1083.6px;width:60px;text-align:center;top:927px;font-size:13px;color:#111">6 %</div>
<div class="t" style="left:1191.8px;width:60px;text-align:center;top:927px;font-size:13px;color:#111">7 %</div>
<div class="t" style="left:1299.9px;width:60px;text-align:center;top:927px;font-size:13px;color:#111">8 %</div>
<div class="t" style="left:1408.1px;width:60px;text-align:center;top:927px;font-size:13px;color:#111">9 %</div>
<div class="t" style="left:1516.3px;width:60px;text-align:center;top:927px;font-size:13px;color:#111">10 %</div>
<div class="t" style="left:1624.5px;width:60px;text-align:center;top:927px;font-size:13px;color:#111">11 %</div>
<div class="t" style="left:958px;width:200px;text-align:center;top:942px;font-size:13px;color:#111">Energiepreissteigerung [%]</div>
<div class="t" style="left:361px;width:118px;text-align:center;top:528px;font-size:13px;color:#111;transform:rotate(-90deg)">Amortisationszeit [a]</div>
<div class="t" style="left:600px;width:876px;text-align:center;top:136px;font-size:13px;font-weight:bold;color:#111;word-spacing:3px">Amortisationszeit in Abhängigkeit von Energiepreisentwicklung bei verschiedenen Kalkulationszinssätzen</div>
<div class="a" style="left:675px;top:990px;width:716px;height:26px;border:2px solid #6a6a6a;background:#fff"></div>
<div class="a" style="left:681px;top:1001px;width:14px;height:2px;background:#E8832A"></div>
<div class="t" style="left:702px;top:996px;font-size:13px;color:#111">Zins  0 %</div>
<div class="a" style="left:770px;top:1001px;width:14px;height:2px;background:#0A3D8F"></div>
<div class="t" style="left:791px;top:996px;font-size:13px;color:#111">Zins  1 %</div>
<div class="a" style="left:859px;top:1001px;width:14px;height:2px;background:#FFD21E"></div>
<div class="t" style="left:880px;top:996px;font-size:13px;color:#111">Zins  2 %</div>
<div class="a" style="left:948px;top:1001px;width:14px;height:2px;background:#4F9A0C"></div>
<div class="t" style="left:969px;top:996px;font-size:13px;color:#111">Zins  3 %</div>
<div class="a" style="left:1037px;top:1001px;width:14px;height:2px;background:#BD1F2A"></div>
<div class="t" style="left:1058px;top:996px;font-size:13px;color:#111">Zins  4 %</div>
<div class="a" style="left:1126px;top:1001px;width:14px;height:2px;background:#3A84BF"></div>
<div class="t" style="left:1147px;top:996px;font-size:13px;color:#111">Zins  5 %</div>
<div class="a" style="left:1215px;top:1001px;width:14px;height:2px;background:#9FD12C"></div>
<div class="t" style="left:1236px;top:996px;font-size:13px;color:#111">Zins  6 %</div>
<div class="a" style="left:1304px;top:1001px;width:14px;height:2px;background:#7A4B3A"></div>
<div class="t" style="left:1325px;top:996px;font-size:13px;color:#111">Zins  7 %</div>
<div class="a" style="left:375px;top:1054px;width:1318px;height:32px;background:#F0F0F0"></div>
<div class="a" style="left:375px;top:1060px;width:24px;height:25px;background:#AAD334"></div>
<svg class="a" style="left:379px;top:1065px" width="15" height="15" viewBox="0 0 15 15"><path d="M1.5,1.5 L13.5,13.5 M13.5,1.5 L1.5,13.5" stroke="#C0202A" stroke-width="1.8"/></svg>
<div class="t" style="left:402px;top:1064px;font-size:12px;font-weight:bold;color:#111">Protokoll- Anzeige</div>
<div class="t" style="left:1249px;top:1065px;font-size:10.7px;color:#111">Durch Klicken der mit einem ⚠ markierten Zeile wird die zugehörige Eingabemaske geöffnet.</div>
<div class="a" style="left:1693px;top:1136px;width:263px;height:20px;background:#F0F0F0"></div>
<div class="a" style="left:1696px;top:93px;width:260px;height:1043px;background:#7A7A7A"></div>
<div class="a" style="left:1699px;top:97px;width:257px;height:388px;background:#fff"></div>
<div class="a" style="left:1699px;top:490px;width:257px;height:119px;background:#fff"></div>
<div class="a" style="left:1699px;top:615px;width:257px;height:82px;background:#fff"></div>
<div class="a" style="left:1699px;top:703px;width:257px;height:112px;background:#fff"></div>
<div class="a" style="left:1699px;top:821px;width:257px;height:119px;background:#fff"></div>
<div class="t" style="left:1709px;top:105.3px;font-size:21px;color:#1d1d1d">GEG 2024</div>
<div class="t" style="left:1709px;top:129.8px;font-size:16px;color:#1d1d1d">DIN V 18599</div>
<div class="a" style="left:1918px;top:108.5px;width:21px;height:21px;border-radius:50%;background:#7EB51C"></div>
<div class="a" style="left:1713px;top:152px;width:227px;height:158px;background:#fff;box-shadow:1px 1px 2px rgba(0,0,0,0.35)"></div>
<div class="a" style="left:1713px;top:152px;width:19px;height:158px;background:#D3D3D3"></div>
<div class="a" style="left:1737px;top:152px;width:203px;height:158px;background:#80B41C"></div>
<div class="t" style="left:1680.5px;top:225.8px;width:80px;text-align:center;font-size:10.5px;color:#111;transform:rotate(-90deg)">Effizienzklasse</div>
<div class="t" style="left:1737px;width:203px;text-align:center;top:149px;font-size:151px;color:#fff;transform:scaleX(0.9);text-shadow:1px 1px 2px rgba(0,0,0,0.25)">A</div>
<div class="t" style="left:1810px;top:284.5px;font-size:15.8px;color:#fff;text-shadow:1px 1px 1px rgba(0,0,0,0.4)"><b>35,6</b> kWh/(m²a)</div>
<div class="a" style="left:1713px;top:317px;width:227px;height:59px;background:#fff;box-shadow:1px 1px 2px rgba(0,0,0,0.35)"></div>
<div class="a" style="left:1713px;top:317px;width:19px;height:59px;background:#D3D3D3"></div>
<div class="t" style="left:1680.5px;top:340.5px;width:80px;text-align:center;font-size:11px;color:#111;transform:rotate(-90deg)">Q<sup style="font-size:8px">P</sup></div>
<div class="a" style="left:1737px;top:317px;width:121px;height:19px;background:#D3D3D3"></div>
<div class="t" style="left:1742px;top:321.8px;font-size:10.5px;color:#111">72,5 kWh/(m²a)</div>
<div class="a" style="left:1737px;top:337px;width:170px;height:19px;background:#3F83B6"></div>
<div class="t" style="left:1742px;top:341.8px;font-size:10.5px;color:#111">101,5 kWh/(m²a)</div>
<div class="a" style="left:1737px;top:356px;width:25px;height:20px;background:linear-gradient(90deg,#4E8A0A,#8CC21E)"></div>
<div class="t" style="left:1742px;top:361.2px;font-size:10.5px;color:#111">14,9 kWh/(m²a)</div>
<div class="a" style="left:1713px;top:383px;width:227px;height:59px;background:#fff;box-shadow:1px 1px 2px rgba(0,0,0,0.35)"></div>
<div class="a" style="left:1713px;top:383px;width:19px;height:59px;background:#D3D3D3"></div>
<div class="t" style="left:1680.5px;top:406.5px;width:80px;text-align:center;font-size:11px;color:#111;transform:rotate(-90deg)">H<sup style="font-size:8px">T</sup></div>
<div class="a" style="left:1737px;top:383px;width:103px;height:19px;background:#D3D3D3"></div>
<div class="t" style="left:1742px;top:387.8px;font-size:10.5px;color:#111">0,42 W/(m²K)</div>
<div class="a" style="left:1737px;top:402px;width:173px;height:20px;background:#3F83B6"></div>
<div class="t" style="left:1742px;top:407.2px;font-size:10.5px;color:#111">0,70 W/(m²K)</div>
<div class="a" style="left:1737px;top:422px;width:68px;height:20px;background:linear-gradient(90deg,#4E8A0A,#C8E040)"></div>
<div class="t" style="left:1742px;top:427.2px;font-size:10.5px;color:#111">0,28 W/(m²K)</div>
<div class="a" style="left:1713px;top:449px;width:227px;height:21px;background:#fff;box-shadow:1px 1px 2px rgba(0,0,0,0.35)"></div>
<div class="a" style="left:1713px;top:449px;width:19px;height:21px;background:#D3D3D3"></div>
<div class="t" style="left:1680.5px;top:454.0px;width:80px;text-align:center;font-size:11px;color:#111;transform:rotate(-90deg)">EH</div>
<div class="a" style="left:1737px;top:449px;width:45px;height:21px;background:#B22025"></div>
<div class="t" style="left:1737px;width:44px;text-align:right;top:454px;font-size:11px;font-weight:bold;color:#fff">40</div>
<div class="a" style="left:1784px;top:449px;width:18px;height:21px;background:#80B41C"></div>
<div class="t" style="left:1784px;width:17px;text-align:right;top:454px;font-size:11px;font-weight:bold;color:#fff">55</div>
<div class="a" style="left:1804px;top:449px;width:17px;height:21px;background:#80B41C"></div>
<div class="t" style="left:1804px;width:16px;text-align:right;top:454px;font-size:11px;font-weight:bold;color:#fff">70</div>
<div class="a" style="left:1823px;top:449px;width:17px;height:21px;background:#80B41C"></div>
<div class="t" style="left:1823px;width:16px;text-align:right;top:454px;font-size:11px;font-weight:bold;color:#fff">85</div>
<div class="a" style="left:1842px;top:449px;width:96px;height:21px;background:#B22025"></div>
<div class="t" style="left:1842px;width:95px;text-align:right;top:454px;font-size:11px;font-weight:bold;color:#fff">160</div>
<div class="t" style="left:1709px;top:500.3px;font-size:21px;color:#1d1d1d">Erneuerbare</div>
<div class="t" style="left:1709px;top:524.8px;font-size:21px;color:#1d1d1d">Energien</div>
<div class="a" style="left:1918px;top:504.0px;width:21px;height:21px;border-radius:50%;background:#7EB51C"></div>
<div class="a" style="left:1713px;top:554px;width:227px;height:40px;background:#fff;box-shadow:1px 1px 2px rgba(0,0,0,0.35)"></div>
<div class="a" style="left:1713px;top:554px;width:19px;height:40px;background:#D3D3D3"></div>
<div class="t" style="left:1680.5px;top:568.5px;width:80px;text-align:center;font-size:11px;color:#111;transform:rotate(-90deg)">EE</div>
<div class="a" style="left:1737px;top:554px;width:131px;height:20px;background:#D3D3D3"></div>
<div class="t" style="left:1742px;top:559.2px;font-size:10.5px;color:#111">65 %</div>
<div class="a" style="left:1737px;top:574px;width:203px;height:20px;background:linear-gradient(90deg,#B71C1C 0%,#E8892E 25%,#FFD21E 50%,#A8D02A 75%,#4E8A0A 100%)"></div>
<div class="t" style="left:1742px;top:579.2px;font-size:10.5px;color:#111">100 %</div>
<div class="t" style="left:1709px;top:624.8px;font-size:21px;color:#1d1d1d">Sommerlicher</div>
<div class="t" style="left:1709px;top:649.3px;font-size:21px;color:#1d1d1d">Wärmeschutz</div>
<div class="t" style="left:1709px;top:674.8px;font-size:16px;color:#1d1d1d">DIN 4108-2</div>
<div class="a" style="left:1918px;top:628.5px;width:21px;height:21px;border-radius:50%;border:1.3px solid #111;background:#fff"></div>
<div class="t" style="left:1709px;top:711.3px;font-size:21px;color:#1d1d1d">Lüftungskonzept</div>
<div class="t" style="left:1709px;top:736.3px;font-size:16px;color:#1d1d1d">DIN 1946-6</div>
<div class="a" style="left:1918px;top:716.0px;width:21px;height:21px;border-radius:50%;background:#7EB51C"></div>
<div class="a" style="left:1713px;top:759px;width:227px;height:40px;background:#fff;box-shadow:1px 1px 2px rgba(0,0,0,0.35)"></div>
<div class="a" style="left:1713px;top:759px;width:19px;height:40px;background:#D3D3D3"></div>
<div class="t" style="left:1680.5px;top:773.5px;width:80px;text-align:center;font-size:11px;color:#111;transform:rotate(-90deg)">inf min</div>
<div class="a" style="left:1737px;top:759px;width:101px;height:20px;background:#D3D3D3"></div>
<div class="t" style="left:1742px;top:764.2px;font-size:10.5px;color:#111">39 m³/h</div>
<div class="a" style="left:1737px;top:779px;width:35px;height:20px;background:#3F83B6"></div>
<div class="t" style="left:1742px;top:784.2px;font-size:10.5px;color:#111">13 m³/h</div>
<div class="t" style="left:1709px;top:829.8px;font-size:21px;color:#1d1d1d">Beratung</div>
<div class="t" style="left:1709px;top:853.8px;font-size:16px;color:#1d1d1d">DIN V 18599</div>
<div class="a" style="left:1713px;top:877px;width:227px;height:20px;background:#fff;box-shadow:1px 1px 2px rgba(0,0,0,0.35)"></div>
<div class="a" style="left:1713px;top:877px;width:19px;height:20px;background:#D3D3D3"></div>
<div class="t" style="left:1680.5px;top:881.5px;width:80px;text-align:center;font-size:11px;color:#111;transform:rotate(-90deg)">Q<sup style="font-size:8px">f</sup></div>
<div class="a" style="left:1737px;top:877px;width:29px;height:20px;background:linear-gradient(90deg,#4E8A0A,#8CC21E)"></div>
<div class="t" style="left:1742px;top:882.2px;font-size:10.5px;color:#111">29,0 kWh/(m²a)</div>
<div class="a" style="left:1713px;top:904px;width:227px;height:20px;background:#fff;box-shadow:1px 1px 2px rgba(0,0,0,0.35)"></div>
<div class="a" style="left:1713px;top:904px;width:19px;height:20px;background:#D3D3D3"></div>
<div class="t" style="left:1680.5px;top:909.0px;width:80px;text-align:center;font-size:10px;color:#111;transform:rotate(-90deg)">CO<sup style="font-size:8px">2</sup></div>
<div class="a" style="left:1737px;top:904px;width:9px;height:20px;background:linear-gradient(90deg,#4E8A0A,#8CC21E)"></div>
<div class="t" style="left:1742px;top:909.2px;font-size:10.5px;color:#111">3,57 kg/(m²a)</div>
<svg class="a" style="left:1660px;top:90px" width="40" height="30" viewBox="0 0 40 30"><line x1="14" y1="23" x2="36" y2="5" stroke="rgba(0,0,0,0.25)" stroke-width="3"/><line x1="12" y1="23" x2="35" y2="4" stroke="#FF0000" stroke-width="2"/></svg>
<div class="a" style="left:1464px;top:112px;width:210px;height:35px;border:2px solid #FF0000;background:#fff;box-shadow:1px 1px 2px rgba(0,0,0,0.2)"></div>
<div class="t" style="left:1464px;width:210px;text-align:center;top:123px;font-size:15px;font-weight:bold;letter-spacing:0.4px;color:#FF0000">ausgewählte Variante</div>
</body></html>
